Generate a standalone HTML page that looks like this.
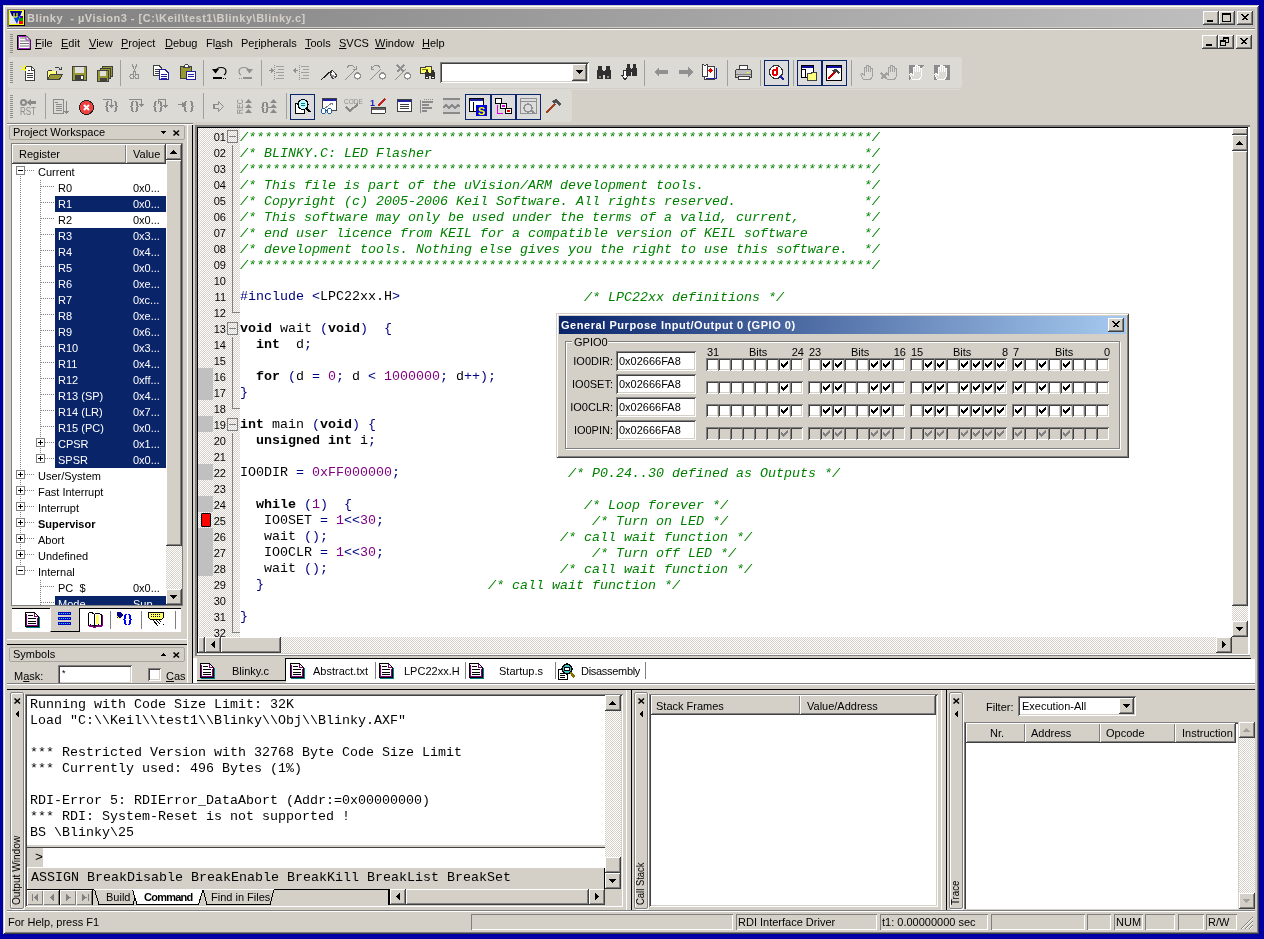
<!DOCTYPE html><html><head><meta charset="utf-8"><title>Blinky - uVision3</title><style>
*{margin:0;padding:0;box-sizing:border-box}
html,body{width:1264px;height:939px;overflow:hidden}
body{background:#0000a4;position:relative;will-change:transform;font-family:"Liberation Sans",sans-serif;font-size:11px;color:#000}
.a{position:absolute}
.t{line-height:13px;white-space:pre}
.m{font-family:"Liberation Mono",monospace;font-size:13.33px;line-height:16px;white-space:pre}
.face{background:#d4d0c8}
.raised{background:#d4d0c8;box-shadow:inset -1px -1px #404040,inset 1px 1px #fff,inset -2px -2px #808080,inset 2px 2px #d4d0c8}
.sunk{box-shadow:inset 1px 1px #808080,inset -1px -1px #fff,inset 2px 2px #404040,inset -2px -2px #d4d0c8}
.thin{box-shadow:inset 1px 1px #fff,inset -1px -1px #808080}
.thinsunk{box-shadow:inset 1px 1px #808080,inset -1px -1px #fff}
.dith{background:repeating-conic-gradient(#d4d0c8 0 25%,#fff 0 50%) 0 0/2px 2px}
.u{text-decoration:underline}
.tb{background:#dcdad5;border-radius:3px}
.grip{background:repeating-linear-gradient(#8f8d88 0 1px,transparent 1px 2px)}
svg{position:absolute;overflow:visible}
</style></head><body><div class="a " style="left:3px;top:5px;width:1256px;height:929px;background:#d4d0c8;box-shadow:inset 1px 1px #d4d0c8,inset -1px -1px #404040,inset 2px 2px #fff,inset -2px -2px #808080"></div><div class="a " style="left:7px;top:9px;width:1248px;height:18px;background:linear-gradient(90deg,#808080,#c0c0c0)"></div><svg style="left:9px;top:10px" width="16" height="16" viewBox="0 0 16 16">
<rect x="0" y="0" width="16" height="16" fill="#000"/><rect x="0" y="0" width="15" height="15" fill="#ff0"/>
<rect x="1" y="1" width="13" height="13" fill="#e8e8f0"/>
<path d="M1 1H13L8 14Z" fill="#0040e0"/><path d="M1 1H13L11 6H3Z" fill="#000090"/>
<path d="M5 3V8M5 7H8M8 3V7" stroke="#ff0" stroke-width="1.2" fill="none"/>
<rect x="11" y="6" width="3" height="2" fill="#4000c0"/><rect x="10" y="8" width="4" height="3" fill="#00a000"/><rect x="10" y="11" width="4" height="3" fill="#f00"/>
</svg><div class="a t " style="left:27px;top:12px;color:#d4d0c8;font-weight:bold;letter-spacing:0.51px">Blinky  - µVision3 - [C:\Keil\test1\Blinky\Blinky.c]</div><div class="a raised" style="left:1203px;top:11px;width:16px;height:14px;"></div><div class="a " style="left:1207px;top:20px;width:6px;height:2px;background:#000"></div><div class="a raised" style="left:1219px;top:11px;width:16px;height:14px;"></div><div class="a " style="left:1222px;top:13px;width:9px;height:9px;border:1px solid #000;border-top-width:2px"></div><div class="a raised" style="left:1237px;top:11px;width:16px;height:14px;"></div><svg style="left:1237px;top:11px" width="16" height="14"><path d="M4.5 3.5L10.5 9.5M10.5 3.5L4.5 9.5M5.5 3.5L11.5 9.5M11.5 3.5L5.5 9.5" stroke="#000" stroke-width="1" fill="none" shape-rendering="crispEdges"/></svg><div class="a " style="left:7px;top:28px;width:1248px;height:1px;background:#808080"></div><div class="a " style="left:7px;top:29px;width:1248px;height:1px;background:#fff"></div><div class="a grip" style="left:10px;top:34px;width:3px;height:19px;"></div><svg style="left:17px;top:35px" width="15" height="15" viewBox="0 0 15 15"><path d="M0.5 0.5H9L13.5 5V14.5H0.5Z" fill="#fff" stroke="#000" stroke-width="1"/><path d="M1.5 1.5H9V5H13V13.5H1.5Z" fill="none" stroke="#a020c0" stroke-width="1"/><path d="M3 3H9M3 6H12M3 8.5H12M3 11H12" stroke="#707070" stroke-width="1.2"/></svg><div class="a t " style="left:35px;top:37px;"><span class="u">F</span>ile</div><div class="a t " style="left:61px;top:37px;"><span class="u">E</span>dit</div><div class="a t " style="left:89px;top:37px;"><span class="u">V</span>iew</div><div class="a t " style="left:121px;top:37px;"><span class="u">P</span>roject</div><div class="a t " style="left:165px;top:37px;"><span class="u">D</span>ebug</div><div class="a t " style="left:206px;top:37px;">Fl<span class="u">a</span>sh</div><div class="a t " style="left:241px;top:37px;">Pe<span class="u">r</span>ipherals</div><div class="a t " style="left:305px;top:37px;"><span class="u">T</span>ools</div><div class="a t " style="left:339px;top:37px;"><span class="u">S</span>VCS</div><div class="a t " style="left:375px;top:37px;"><span class="u">W</span>indow</div><div class="a t " style="left:422px;top:37px;"><span class="u">H</span>elp</div><div class="a raised" style="left:1202px;top:35px;width:16px;height:14px;"></div><div class="a " style="left:1206px;top:44px;width:6px;height:2px;background:#000"></div><div class="a raised" style="left:1218px;top:35px;width:16px;height:14px;"></div><div class="a " style="left:1223px;top:37px;width:6px;height:6px;border:1px solid #000;border-top-width:2px"></div><div class="a " style="left:1220px;top:40px;width:6px;height:6px;border:1px solid #000;border-top-width:2px;background:#d4d0c8"></div><div class="a raised" style="left:1236px;top:35px;width:16px;height:14px;"></div><svg style="left:1236px;top:35px" width="16" height="14"><path d="M4.5 3.5L10.5 9.5M10.5 3.5L4.5 9.5M5.5 3.5L11.5 9.5M11.5 3.5L5.5 9.5" stroke="#000" stroke-width="1" fill="none" shape-rendering="crispEdges"/></svg><div class="a tb" style="left:8px;top:57px;width:954px;height:31px;"></div><div class="a " style="left:10px;top:89px;width:950px;height:1px;background:#dcdad5"></div><div class="a grip" style="left:10px;top:62px;width:3px;height:22px;"></div><div class="a tb" style="left:8px;top:90px;width:564px;height:32px;"></div><div class="a grip" style="left:10px;top:95px;width:3px;height:23px;"></div><div class="a " style="left:7px;top:123px;width:186px;height:1px;background:#808080"></div><div class="a " style="left:7px;top:124px;width:186px;height:1px;background:#fff"></div><svg style="left:21px;top:65px" width="16" height="16" viewBox="0 0 16 16" shape-rendering="crispEdges"><path d="M4.5 1.5H10L13.5 5V15.5H4.5Z" fill="#fff" stroke="#404040"/><path d="M10 1.5V5H13.5" fill="#fff" stroke="#404040"/><path d="M6 8.5H12M6 10.5H12M6 12.5H12M7 5.5H9" stroke="#404040"/><path d="M0 1L5 6M3 0V5M0 4H5M5 1L1 5" stroke="#ff0" stroke-width="1"/></svg><svg style="left:47px;top:66px" width="16" height="15" viewBox="0 0 16 15" shape-rendering="crispEdges"><path d="M0.5 4.5H4L5 5.5H9V8" fill="#fff" stroke="#404040"/><path d="M0.5 4.5V13.5H11" fill="none" stroke="#404040"/><rect x="1" y="5" width="8" height="8" fill="#ffff80"/><path d="M0.5 13.5L3.5 8.5H15.5L12.5 13.5Z" fill="#999933" stroke="#404040"/><path d="M8 2Q11 0 13 3M11.5 3H14.5V1" fill="none" stroke="#404040"/></svg><svg style="left:72px;top:66px" width="15" height="15" viewBox="0 0 15 15" shape-rendering="crispEdges"><rect x="0.5" y="0.5" width="14" height="14" fill="#999933" stroke="#404040"/><rect x="3" y="1" width="9" height="6" fill="#e0e0e0"/><rect x="3" y="9" width="9" height="5.5" fill="#404040"/><rect x="9" y="10" width="2" height="3" fill="#fff"/></svg><svg style="left:97px;top:66px" width="16" height="16" viewBox="0 0 16 16" shape-rendering="crispEdges"><rect x="5.5" y="0.5" width="10" height="10" fill="#999933" stroke="#404040"/><rect x="3.5" y="2.5" width="10" height="10" fill="#999933" stroke="#404040"/><rect x="0.5" y="4.5" width="11" height="11" fill="#999933" stroke="#404040"/><rect x="3" y="5" width="6" height="5" fill="#e0e0e0"/><rect x="3" y="12" width="7" height="3" fill="#404040"/></svg><div class="a " style="left:120px;top:60px;width:1px;height:26px;background:#a0a0a0"></div><svg style="left:129px;top:64px" width="12" height="16" viewBox="0 0 12 16" shape-rendering="crispEdges"><path d="M3 0L7 10M8 0L4 10" stroke="#909090"/><circle cx="3" cy="12.5" r="2" fill="none" stroke="#909090"/><circle cx="8" cy="12.5" r="2" fill="none" stroke="#909090"/></svg><svg style="left:153px;top:65px" width="16" height="15" viewBox="0 0 16 15" shape-rendering="crispEdges"><path d="M0.5 0.5H6L8.5 3V10.5H0.5Z" fill="#fff" stroke="#404040"/><path d="M2 4H7M2 6H7M2 8H6" stroke="#404040"/><path d="M6.5 4.5H12L15.5 8V14.5H6.5Z" fill="#fff" stroke="#2020a0"/><path d="M8 9H14M8 11H14M8 13H14" stroke="#2020a0"/></svg><svg style="left:180px;top:64px" width="16" height="16" viewBox="0 0 16 16" shape-rendering="crispEdges"><rect x="0.5" y="2.5" width="11" height="12" fill="#999933" stroke="#404040"/><path d="M3.5 3.5L5.5 0.5H7.5L9.5 3.5Z" fill="#fff" stroke="#404040"/><rect x="6.5" y="7.5" width="9" height="8" fill="#fff" stroke="#2020a0"/><path d="M8 10H14M8 12H14" stroke="#2020a0"/></svg><div class="a " style="left:203px;top:60px;width:1px;height:26px;background:#a0a0a0"></div><svg style="left:212px;top:65px" width="16" height="15" viewBox="0 0 16 15" shape-rendering="crispEdges"><path d="M3.5 7.5Q4 2.5 9 2.5Q14 2.5 14 6.5Q14 9 12 10" fill="none" stroke="#000" stroke-width="1.2" shape-rendering="auto"/><path d="M0 4L3.5 8.5L7 4Z" fill="#000" shape-rendering="auto"/><path d="M1 12.5H10" stroke="#000" stroke-width="2"/><path d="M11 13H12M13 13H14" stroke="#000"/></svg><svg style="left:237px;top:65px" width="16" height="15" viewBox="0 0 16 15" shape-rendering="crispEdges"><path d="M12.5 7.5Q12 2.5 7 2.5Q2 2.5 2 6.5Q2 9 4 10" fill="none" stroke="#909090" stroke-width="1.2" shape-rendering="auto"/><path d="M16 4L12.5 8.5L9 4Z" fill="#909090" shape-rendering="auto"/><path d="M6 12.5H15" stroke="#909090" stroke-width="2"/><path d="M2 13H3M4 13H5" stroke="#909090"/></svg><div class="a " style="left:261px;top:60px;width:1px;height:26px;background:#a0a0a0"></div><svg style="left:269px;top:65px" width="16" height="15" viewBox="0 0 16 15" shape-rendering="crispEdges"><path d="M7 1.5H15M9 4.5H15M7 7.5H15M9 10.5H15M7 13.5H15" stroke="#a0a0a0"/><path d="M0 5.5H4M2 3.5L4 5.5L2 7.5" stroke="#909090" fill="none"/><path d="M5 0V15" stroke="#909090" stroke-dasharray="1 1"/></svg><svg style="left:294px;top:65px" width="16" height="15" viewBox="0 0 16 15" shape-rendering="crispEdges"><path d="M7 1.5H15M9 4.5H15M7 7.5H15M9 10.5H15M7 13.5H15" stroke="#a0a0a0"/><path d="M4 5.5H0M2 3.5L0 5.5L2 7.5" stroke="#909090" fill="none"/><path d="M5 0V15" stroke="#909090" stroke-dasharray="1 1"/></svg><svg style="left:321px;top:65px" width="16" height="16" viewBox="0 0 16 16" shape-rendering="crispEdges"><path d="M0 15L11 5" stroke="#202020" stroke-width="1.1"/><path d="M11 5L9 10L12 14L16 11L14 8Z" fill="#fff" stroke="#404040"/><path d="M10 10L14 12" stroke="#909090" stroke-width="2"/></svg><svg style="left:345px;top:64px" width="16" height="17" viewBox="0 0 16 17" shape-rendering="crispEdges"><path d="M0 16L11 5" stroke="#909090" stroke-width="1.1"/><path d="M2 4Q4 0 8 2L10 4" fill="none" stroke="#909090" stroke-width="1.2"/><path d="M8 5H11V2" fill="none" stroke="#909090"/><circle cx="12.5" cy="12" r="3" fill="#fff" stroke="#909090" stroke-width="1.3"/></svg><svg style="left:370px;top:64px" width="16" height="17" viewBox="0 0 16 17" shape-rendering="crispEdges"><path d="M0 16L11 5" stroke="#909090" stroke-width="1.1"/><path d="M10 4Q8 0 4 2L2 4" fill="none" stroke="#909090" stroke-width="1.2"/><path d="M4 5H1V2" fill="none" stroke="#909090"/><circle cx="12.5" cy="12" r="3" fill="#fff" stroke="#909090" stroke-width="1.3"/></svg><svg style="left:395px;top:64px" width="16" height="17" viewBox="0 0 16 17" shape-rendering="crispEdges"><path d="M0 16L11 5" stroke="#909090" stroke-width="1.1"/><path d="M2 1L9 8M9 1L2 8" stroke="#909090" stroke-width="2"/><circle cx="12.5" cy="12" r="3" fill="#fff" stroke="#909090" stroke-width="1.3"/></svg><svg style="left:420px;top:64px" width="16" height="16" viewBox="0 0 16 16" shape-rendering="crispEdges"><path d="M0.5 3.5H5L6 2H11V9H0.5Z" fill="#ffff60" stroke="#404040"/><path d="M2 5H8" stroke="#808000"/><rect x="5" y="8" width="4" height="7" fill="#303030"/><rect x="11" y="8" width="4" height="7" fill="#303030"/><rect x="7" y="9" width="6" height="3" fill="#303030"/><rect x="6" y="6" width="2" height="3" fill="#303030"/><rect x="12" y="6" width="2" height="3" fill="#303030"/><rect x="6" y="13" width="2" height="1" fill="#fff"/><rect x="12" y="13" width="2" height="1" fill="#fff"/></svg><div class="a sunk" style="left:440px;top:62px;width:149px;height:21px;background:#fff"></div><div class="a raised" style="left:572px;top:64px;width:15px;height:17px;"></div><svg style="left:572px;top:64px" width="15" height="17" viewBox="0 0 15 17" shape-rendering="crispEdges"><rect x="4" y="6" width="7" height="1" fill="#000"/><rect x="5" y="7" width="5" height="1" fill="#000"/><rect x="6" y="8" width="3" height="1" fill="#000"/><rect x="7" y="9" width="1" height="1" fill="#000"/></svg><svg style="left:596px;top:65px" width="16" height="14" viewBox="0 0 16 14" shape-rendering="crispEdges"><rect x="1" y="5" width="6" height="9" fill="#303030"/><rect x="9" y="5" width="6" height="9" fill="#303030"/><rect x="5" y="6" width="6" height="4" fill="#303030"/><rect x="2" y="1" width="4" height="5" fill="#303030"/><rect x="10" y="1" width="4" height="5" fill="#303030"/><rect x="3" y="11" width="2" height="2" fill="#909090"/><rect x="11" y="11" width="2" height="2" fill="#909090"/></svg><svg style="left:621px;top:64px" width="16" height="16" viewBox="0 0 16 16" shape-rendering="crispEdges"><rect x="5" y="4" width="5" height="8" fill="#303030"/><rect x="11" y="4" width="5" height="8" fill="#303030"/><rect x="8" y="5" width="5" height="3" fill="#303030"/><rect x="6" y="0" width="3" height="5" fill="#303030"/><rect x="12" y="0" width="3" height="5" fill="#303030"/><path d="M2.5 6.5H5.5V11.5H7.5L4 15.5L0.5 11.5H2.5Z" fill="#fff" stroke="#303030"/></svg><div class="a " style="left:644px;top:60px;width:1px;height:26px;background:#a0a0a0"></div><svg style="left:653px;top:66px" width="16" height="12" viewBox="0 0 16 12" shape-rendering="crispEdges"><path d="M1 6L6 1V4H15V8H6V11Z" fill="#909090"/></svg><svg style="left:678px;top:66px" width="16" height="12" viewBox="0 0 16 12" shape-rendering="crispEdges"><path d="M15 6L10 1V4H1V8H10V11Z" fill="#909090"/></svg><svg style="left:702px;top:64px" width="16" height="16" viewBox="0 0 16 16" shape-rendering="crispEdges"><path d="M2.5 2.5H12.5V15.5H2.5Z" fill="#fff" stroke="#404040"/><path d="M0.5 0.5Q3 2 5.5 0.5V12Q3 14 0.5 12Z" fill="#fff" stroke="#404040"/><circle cx="8.5" cy="6.5" r="2.2" fill="#e00000"/><path d="M4 14H14V4" fill="none" stroke="#2020a0"/></svg><div class="a " style="left:727px;top:60px;width:1px;height:26px;background:#a0a0a0"></div><svg style="left:735px;top:65px" width="17" height="15" viewBox="0 0 17 15" shape-rendering="crispEdges"><path d="M4.5 0.5H12.5V5.5H4.5Z" fill="#fff" stroke="#404040"/><path d="M0.5 6.5Q0.5 4.5 3 4.5H14Q16.5 4.5 16.5 6.5V12.5H0.5Z" fill="#c0c0c0" stroke="#404040"/><path d="M1 9H16" stroke="#808080"/><rect x="3" y="11.5" width="11" height="3" fill="#fff" stroke="#404040"/><rect x="12" y="7" width="2" height="1" fill="#ff0"/></svg><div class="a " style="left:760px;top:60px;width:1px;height:26px;background:#a0a0a0"></div><div class="a " style="left:764px;top:60px;width:25px;height:26px;background:#dcdcdf;border:1px solid #0a246a"></div><svg style="left:768px;top:64px" width="18" height="18" viewBox="0 0 18 18" shape-rendering="crispEdges"><circle cx="8" cy="8" r="6.5" fill="#fff" stroke="#303030" stroke-width="1.2"/><path d="M12 12L16 16" stroke="#2020a0" stroke-width="2.5"/><path d="M9 3V11M9 11H7Q5 11 5 8.5Q5 6 7 6H9" fill="none" stroke="#e00000" stroke-width="2"/></svg><div class="a " style="left:793px;top:60px;width:1px;height:26px;background:#a0a0a0"></div><div class="a " style="left:797px;top:60px;width:25px;height:26px;background:#dcdcdf;border:1px solid #0a246a"></div><div class="a " style="left:822px;top:60px;width:25px;height:26px;background:#dcdcdf;border:1px solid #0a246a"></div><svg style="left:801px;top:65px" width="17" height="16" viewBox="0 0 17 16" shape-rendering="crispEdges"><rect x="0.5" y="0.5" width="12" height="12" fill="#fff" stroke="#000"/><rect x="1" y="1" width="11" height="2" fill="#1010a0"/><path d="M1 4H4V12" fill="none" stroke="#000"/><path d="M6.5 8.5H10L11 7.5H15.5V15.5H6.5Z" fill="#ffff80" stroke="#404040"/></svg><svg style="left:826px;top:65px" width="16" height="16" viewBox="0 0 16 16" shape-rendering="crispEdges"><rect x="0.5" y="0.5" width="15" height="15" fill="#fff" stroke="#000"/><rect x="1" y="1" width="14" height="2" fill="#1010a0"/><path d="M2 14L9 7" stroke="#c00000" stroke-width="2"/><path d="M6 5L10 4L14 8L12 9L10 7L8 8Z" fill="#404040"/></svg><div class="a " style="left:851px;top:60px;width:1px;height:26px;background:#a0a0a0"></div><svg style="left:860px;top:65px" width="16" height="16" viewBox="0 0 16 16" shape-rendering="crispEdges"><path d="M3.5 14.5L0.5 9.5L2 8.5L4.5 10.5V3Q4.5 2 5.5 2Q6.5 2 6.5 3V7V1.5Q6.5 0.5 7.5 0.5Q8.5 0.5 8.5 1.5V7V2Q8.5 1 9.5 1Q10.5 1 10.5 2V7V4Q10.5 3 11.5 3Q12.5 3 12.5 4V11L10.5 14.5Z" fill="none" stroke="#a0a0a0"/></svg><svg style="left:884px;top:65px" width="16" height="16" viewBox="0 0 16 16" shape-rendering="crispEdges"><path d="M3.5 14.5L0.5 9.5L2 8.5L4.5 10.5V3Q4.5 2 5.5 2Q6.5 2 6.5 3V7V1.5Q6.5 0.5 7.5 0.5Q8.5 0.5 8.5 1.5V7V2Q8.5 1 9.5 1Q10.5 1 10.5 2V7V4Q10.5 3 11.5 3Q12.5 3 12.5 4V11L10.5 14.5Z" fill="none" stroke="#a0a0a0"/></svg><svg style="left:880px;top:65px" width="16" height="16" viewBox="0 0 16 16" shape-rendering="crispEdges"><path d="M1 8L7 14M7 8L1 14" stroke="#a0a0a0" stroke-width="2"/></svg><svg style="left:909px;top:65px" width="16" height="16" viewBox="0 0 16 16" shape-rendering="crispEdges"><path d="M0 0H16L0 15Z" fill="#8c8c8c"/><path d="M3.5 14.5L0.5 9.5L2 8.5L4.5 10.5V3Q4.5 2 5.5 2Q6.5 2 6.5 3V7V1.5Q6.5 0.5 7.5 0.5Q8.5 0.5 8.5 1.5V7V2Q8.5 1 9.5 1Q10.5 1 10.5 2V7V4Q10.5 3 11.5 3Q12.5 3 12.5 4V11L10.5 14.5Z" fill="#dcdad5" stroke="#fff"/></svg><svg style="left:909px;top:65px" width="16" height="15" viewBox="0 0 16 15" shape-rendering="crispEdges"><path d="M0 0H16V15H0Z" fill="none"/><path d="M16 0V15H0" fill="#8c8c8c" opacity="0"/></svg><svg style="left:934px;top:65px" width="16" height="16" viewBox="0 0 16 16" shape-rendering="crispEdges"><rect x="0" y="0" width="16" height="15" fill="#8c8c8c"/><path d="M3.5 14.5L0.5 9.5L2 8.5L4.5 10.5V3Q4.5 2 5.5 2Q6.5 2 6.5 3V7V1.5Q6.5 0.5 7.5 0.5Q8.5 0.5 8.5 1.5V7V2Q8.5 1 9.5 1Q10.5 1 10.5 2V7V4Q10.5 3 11.5 3Q12.5 3 12.5 4V11L10.5 14.5Z" fill="#dcdad5" stroke="#fff"/></svg><svg style="left:20px;top:99px" width="17" height="16" viewBox="0 0 17 16" shape-rendering="crispEdges"><circle cx="3.5" cy="3.5" r="2.5" fill="none" stroke="#8a8a8a" stroke-width="2" shape-rendering="auto"/><path d="M10 3.5H16" stroke="#8a8a8a" stroke-width="3"/><path d="M11 0L6.5 3.5L11 7Z" fill="#8a8a8a" shape-rendering="auto"/><text x="0" y="15.5" font-family="Liberation Sans" font-size="10" fill="#8a8a8a" textLength="16" lengthAdjust="spacingAndGlyphs">RST</text></svg><div class="a " style="left:45px;top:93px;width:1px;height:26px;background:#a0a0a0"></div><svg style="left:53px;top:99px" width="17" height="16" viewBox="0 0 17 16" shape-rendering="crispEdges"><rect x="0.5" y="0.5" width="10" height="14" fill="none" stroke="#8a8a8a"/><path d="M2 3H5M3 5H9M3 7H9M3 9H9M3 11H9" stroke="#8a8a8a"/><path d="M13.5 2V14" stroke="#8a8a8a"/><path d="M11 12L13.5 15L16 12Z" fill="#8a8a8a"/></svg><svg style="left:79px;top:100px" width="16" height="16" viewBox="0 0 16 16" shape-rendering="crispEdges"><circle cx="7.5" cy="7.5" r="7" fill="#f04040" stroke="#202020"/><path d="M5 5L10 10M10 5L5 10" stroke="#fff" stroke-width="2" shape-rendering="auto"/></svg><svg style="left:103px;top:98px" width="16" height="16" viewBox="0 0 16 16" shape-rendering="crispEdges"><rect x="4" y="3" width="2" height="1" fill="#8a8a8a"/><rect x="3" y="4" width="2" height="4" fill="#8a8a8a"/><rect x="2" y="8" width="2" height="1" fill="#8a8a8a"/><rect x="3" y="9" width="2" height="4" fill="#8a8a8a"/><rect x="4" y="13" width="2" height="1" fill="#8a8a8a"/><rect x="11" y="3" width="2" height="1" fill="#8a8a8a"/><rect x="12" y="4" width="2" height="4" fill="#8a8a8a"/><rect x="13" y="8" width="2" height="1" fill="#8a8a8a"/><rect x="12" y="9" width="2" height="4" fill="#8a8a8a"/><rect x="11" y="13" width="2" height="1" fill="#8a8a8a"/><path d="M0 1.5H7.5Q8.5 1.5 8.5 3V8" fill="none" stroke="#8a8a8a"/><path d="M6 7H11L8.5 10Z" fill="#8a8a8a"/></svg><svg style="left:129px;top:98px" width="16" height="16" viewBox="0 0 16 16" shape-rendering="crispEdges"><rect x="3" y="3" width="2" height="1" fill="#8a8a8a"/><rect x="2" y="4" width="2" height="4" fill="#8a8a8a"/><rect x="1" y="8" width="2" height="1" fill="#8a8a8a"/><rect x="2" y="9" width="2" height="4" fill="#8a8a8a"/><rect x="3" y="13" width="2" height="1" fill="#8a8a8a"/><rect x="6" y="3" width="2" height="1" fill="#8a8a8a"/><rect x="7" y="4" width="2" height="4" fill="#8a8a8a"/><rect x="8" y="8" width="2" height="1" fill="#8a8a8a"/><rect x="7" y="9" width="2" height="4" fill="#8a8a8a"/><rect x="6" y="13" width="2" height="1" fill="#8a8a8a"/><path d="M0 1.5H11.5Q12.5 1.5 12.5 3V6" fill="none" stroke="#8a8a8a"/><path d="M10 6H15L12.5 9Z" fill="#8a8a8a"/></svg><svg style="left:153px;top:98px" width="16" height="16" viewBox="0 0 16 16" shape-rendering="crispEdges"><rect x="2" y="3" width="2" height="1" fill="#8a8a8a"/><rect x="1" y="4" width="2" height="4" fill="#8a8a8a"/><rect x="0" y="8" width="2" height="1" fill="#8a8a8a"/><rect x="1" y="9" width="2" height="4" fill="#8a8a8a"/><rect x="2" y="13" width="2" height="1" fill="#8a8a8a"/><rect x="6" y="3" width="2" height="1" fill="#8a8a8a"/><rect x="7" y="4" width="2" height="4" fill="#8a8a8a"/><rect x="8" y="8" width="2" height="1" fill="#8a8a8a"/><rect x="7" y="9" width="2" height="4" fill="#8a8a8a"/><rect x="6" y="13" width="2" height="1" fill="#8a8a8a"/><path d="M5.5 6V2.5Q5.5 1.5 7 1.5H11.5Q12.5 1.5 12.5 3V7" fill="none" stroke="#8a8a8a"/><path d="M10 7H15L12.5 10Z" fill="#8a8a8a"/></svg><svg style="left:178px;top:98px" width="16" height="16" viewBox="0 0 16 16" shape-rendering="crispEdges"><rect x="7" y="3" width="2" height="1" fill="#8a8a8a"/><rect x="6" y="4" width="2" height="4" fill="#8a8a8a"/><rect x="5" y="8" width="2" height="1" fill="#8a8a8a"/><rect x="6" y="9" width="2" height="4" fill="#8a8a8a"/><rect x="7" y="13" width="2" height="1" fill="#8a8a8a"/><rect x="12" y="3" width="2" height="1" fill="#8a8a8a"/><rect x="13" y="4" width="2" height="4" fill="#8a8a8a"/><rect x="14" y="8" width="2" height="1" fill="#8a8a8a"/><rect x="13" y="9" width="2" height="4" fill="#8a8a8a"/><rect x="12" y="13" width="2" height="1" fill="#8a8a8a"/><path d="M0 6.5H5" stroke="#8a8a8a"/><path d="M4 4L7 6.5L4 9Z" fill="#8a8a8a"/></svg><div class="a " style="left:203px;top:93px;width:1px;height:26px;background:#a0a0a0"></div><svg style="left:213px;top:100px" width="12" height="13" viewBox="0 0 12 13" shape-rendering="crispEdges"><path d="M1.5 4.5H5.5V1.5L10.5 6.5L5.5 11.5V8.5H1.5Z" fill="none" stroke="#8a8a8a" shape-rendering="auto"/><path d="M1 4V9" stroke="#8a8a8a" stroke-width="2"/></svg><svg style="left:236px;top:98px" width="17" height="17" viewBox="0 0 17 17" shape-rendering="crispEdges"><text x="7" y="16" transform="rotate(-90 7 16)" font-family="Liberation Sans" font-size="9" fill="#8a8a8a" textLength="15" lengthAdjust="spacingAndGlyphs">REC</text><path d="M9 5L12.5 1L16 5Z M9 10L12.5 6L16 10Z M9 15L12.5 11L16 15Z" fill="#8a8a8a" shape-rendering="auto"/></svg><svg style="left:261px;top:98px" width="17" height="17" viewBox="0 0 17 17" shape-rendering="crispEdges"><rect x="2" y="4" width="2" height="1" fill="#8a8a8a"/><rect x="1" y="5" width="2" height="4" fill="#8a8a8a"/><rect x="0" y="9" width="2" height="1" fill="#8a8a8a"/><rect x="1" y="10" width="2" height="4" fill="#8a8a8a"/><rect x="2" y="14" width="2" height="1" fill="#8a8a8a"/><rect x="4" y="4" width="2" height="1" fill="#8a8a8a"/><rect x="5" y="5" width="2" height="4" fill="#8a8a8a"/><rect x="6" y="9" width="2" height="1" fill="#8a8a8a"/><rect x="5" y="10" width="2" height="4" fill="#8a8a8a"/><rect x="4" y="14" width="2" height="1" fill="#8a8a8a"/><path d="M8 9.5H10" stroke="#8a8a8a"/><path d="M9 5L12.5 1L16 5Z M9 10L12.5 6L16 10Z M9 15L12.5 11L16 15Z" fill="#8a8a8a" shape-rendering="auto"/></svg><div class="a " style="left:286px;top:93px;width:1px;height:26px;background:#a0a0a0"></div><div class="a " style="left:290px;top:94px;width:25px;height:26px;background:#dcdcdf;border:1px solid #0a246a"></div><svg style="left:294px;top:98px" width="18" height="18" viewBox="0 0 18 18" shape-rendering="crispEdges"><path d="M1.5 5.5H7.5L10.5 8.5V15.5H1.5Z" fill="#fff" stroke="#000"/><circle cx="9" cy="6.5" r="5" fill="#c0ffff" stroke="#000" stroke-width="1.2"/><path d="M7 5H11M7 7H11" stroke="#008080"/><path d="M12.5 10L16 14" stroke="#000" stroke-width="2"/></svg><svg style="left:320px;top:98px" width="17" height="16" viewBox="0 0 17 16" shape-rendering="crispEdges"><rect x="2.5" y="0.5" width="14" height="12" fill="#fff" stroke="#404040"/><rect x="3" y="1" width="13" height="2" fill="#2020a0"/><path d="M5 10L12 5M10 5H12V7" stroke="#808080" fill="none"/><circle cx="3.5" cy="13" r="2.5" fill="#fff" stroke="#2060a0"/><circle cx="9.5" cy="13" r="2.5" fill="#fff" stroke="#2060a0"/></svg><svg style="left:344px;top:98px" width="16" height="16" viewBox="0 0 16 16" shape-rendering="crispEdges"><text x="0" y="6" font-family="Liberation Sans" font-size="6.5" fill="#8a8a8a">CODE</text><path d="M2 9L6 13L14 6" fill="none" stroke="#8a8a8a" stroke-width="2"/></svg><svg style="left:370px;top:98px" width="17" height="16" viewBox="0 0 17 16" shape-rendering="crispEdges"><text x="0" y="8" font-family="Liberation Sans" font-weight="bold" font-size="9" fill="#2020c0">1</text><path d="M8 8L15 1" stroke="#c02020" stroke-width="2"/><path d="M1.5 9.5H15.5V13.5Q15.5 15.5 13.5 15.5H1.5Z" fill="#fff" stroke="#404040"/><rect x="2" y="10" width="13" height="2" fill="#606060"/></svg><svg style="left:397px;top:99px" width="15" height="13" viewBox="0 0 15 13" shape-rendering="crispEdges"><rect x="0.5" y="0.5" width="14" height="12" fill="#fff" stroke="#404040"/><rect x="1" y="1" width="13" height="2" fill="#2020a0"/><path d="M3 5H12M3 7H12M3 9H12" stroke="#404040"/></svg><svg style="left:419px;top:99px" width="16" height="15" viewBox="0 0 16 15" shape-rendering="crispEdges"><path d="M1 1V14" stroke="#8a8a8a"/><path d="M3 3H14M3 6H10M3 9H13M3 12H8" stroke="#8a8a8a" stroke-width="2"/><path d="M5 0H14" stroke="#8a8a8a" stroke-dasharray="1 1"/></svg><svg style="left:443px;top:98px" width="17" height="16" viewBox="0 0 17 16" shape-rendering="crispEdges"><rect x="0" y="0" width="17" height="16" fill="#d0d0d0"/><path d="M0 1H17M0 15H17" stroke="#8a8a8a" stroke-width="2"/><path d="M0 10L3 7L6 10L9 7L12 10L15 7L17 9" fill="none" stroke="#8a8a8a" stroke-width="1.5"/></svg><div class="a " style="left:465px;top:94px;width:26px;height:26px;background:#dcdcdf;border:1px solid #0a246a"></div><div class="a " style="left:491px;top:94px;width:25px;height:26px;background:#dcdcdf;border:1px solid #0a246a"></div><div class="a " style="left:516px;top:94px;width:25px;height:26px;background:#dcdcdf;border:1px solid #0a246a"></div><svg style="left:469px;top:98px" width="18" height="18" viewBox="0 0 18 18" shape-rendering="crispEdges"><rect x="0.5" y="0.5" width="14" height="13" fill="#fff" stroke="#000"/><rect x="1" y="1" width="13" height="2" fill="#2020a0"/><path d="M4 4V13" stroke="#000"/><rect x="7" y="7" width="11" height="11" fill="#0000e0"/><text x="9" y="16.5" font-family="Liberation Sans" font-weight="bold" font-size="11" fill="#ff0">S</text></svg><svg style="left:495px;top:98px" width="18" height="18" viewBox="0 0 18 18" shape-rendering="crispEdges"><rect x="0.5" y="0.5" width="6" height="5" fill="#fff" stroke="#000"/><rect x="5.5" y="5.5" width="6" height="5" fill="#fff" stroke="#000"/><rect x="10.5" y="10.5" width="6" height="5" fill="#fff" stroke="#000"/><rect x="12" y="12" width="3" height="2" fill="#e00000"/><rect x="7" y="7" width="3" height="2" fill="#e000e0"/><path d="M2 7V15H8" fill="none" stroke="#e000e0"/></svg><svg style="left:520px;top:98px" width="17" height="17" viewBox="0 0 17 17" shape-rendering="crispEdges"><rect x="0.5" y="0.5" width="16" height="15" fill="none" stroke="#909090"/><path d="M1 3H16" stroke="#909090"/><circle cx="8" cy="10" r="4" fill="none" stroke="#909090" stroke-width="1.5"/><path d="M12 13L15 16" stroke="#909090" stroke-width="1.5"/></svg><svg style="left:545px;top:98px" width="16" height="16" viewBox="0 0 16 16" shape-rendering="crispEdges"><path d="M1 15L10 6" stroke="#a04020" stroke-width="2.2"/><path d="M7 3L11 1L16 6L14 8L11 5L9 6Z" fill="#505050"/></svg><div class="a " style="left:9px;top:125px;width:176px;height:15px;border:1px solid #a8a59f;border-radius:2px"></div><div class="a t " style="left:13px;top:126px;">Project Workspace</div><svg style="left:161px;top:131px" width="5" height="3" viewBox="0 0 5 3" shape-rendering="crispEdges"><rect x="0" y="0" width="5" height="1" fill="#000"/><rect x="1" y="1" width="3" height="1" fill="#000"/><rect x="2" y="2" width="1" height="1" fill="#000"/></svg><svg style="left:173px;top:130px" width="7" height="6" viewBox="0 0 7 6" shape-rendering="crispEdges"><path d="M0.5 0.5L6 5.5M6 0.5L0.5 5.5" stroke="#000" stroke-width="1.6" shape-rendering="auto"/></svg><div class="a " style="left:11px;top:143px;width:172px;height:463px;background:#fff;border:1px solid #808080;border-right-color:#808080"></div><div class="a raised" style="left:12px;top:144px;width:115px;height:20px;"></div><div class="a t " style="left:19px;top:148px;">Register</div><div class="a raised" style="left:126px;top:144px;width:40px;height:20px;"></div><div class="a t " style="left:133px;top:148px;">Value</div><div class="a " style="left:166px;top:144px;width:16px;height:461px;background:#d4d0c8"></div><div class="a raised" style="left:166px;top:144px;width:16px;height:16px;"></div><svg style="left:166px;top:144px" width="16" height="16" viewBox="0 0 16 16" shape-rendering="crispEdges"><rect x="4" y="9" width="7" height="1" fill="#000"/><rect x="5" y="8" width="5" height="1" fill="#000"/><rect x="6" y="7" width="3" height="1" fill="#000"/><rect x="7" y="6" width="1" height="1" fill="#000"/></svg><div class="a raised" style="left:166px;top:160px;width:16px;height:386px;"></div><div class="a dith" style="left:166px;top:546px;width:16px;height:44px;"></div><div class="a raised" style="left:166px;top:589px;width:16px;height:16px;"></div><svg style="left:166px;top:589px" width="16" height="16" viewBox="0 0 16 16" shape-rendering="crispEdges"><rect x="4" y="6" width="7" height="1" fill="#000"/><rect x="5" y="7" width="5" height="1" fill="#000"/><rect x="6" y="8" width="3" height="1" fill="#000"/><rect x="7" y="9" width="1" height="1" fill="#000"/></svg><div class="a" style="left:12px;top:164px;width:154px;height:441px;overflow:hidden"><div class="a" style="left:8px;top:12px;width:1px;height:394px;background:repeating-linear-gradient(#808080 0 1px,transparent 1px 2px)"></div><div class="a" style="left:28px;top:16px;width:1px;height:279px;background:repeating-linear-gradient(#808080 0 1px,transparent 1px 2px)"></div><div class="a" style="left:28px;top:416px;width:1px;height:40px;background:repeating-linear-gradient(#808080 0 1px,transparent 1px 2px)"></div><div class="a" style="left:9px;top:6px;width:14px;height:1px;background:repeating-linear-gradient(90deg,#808080 0 1px,transparent 1px 2px)"></div><div class="a t" style="left:26px;top:2px;color:#000;">Current</div><div class="a" style="left:4px;top:2px;width:9px;height:9px;border:1px solid #808080;background:#fff"></div><div class="a" style="left:6px;top:6px;width:5px;height:1px;background:#000"></div><div class="a" style="left:29px;top:22px;width:14px;height:1px;background:repeating-linear-gradient(90deg,#808080 0 1px,transparent 1px 2px)"></div><div class="a t" style="left:46px;top:18px;color:#000;">R0</div><div class="a t" style="left:121px;top:18px;color:#000">0x0...</div><div class="a" style="left:29px;top:38px;width:14px;height:1px;background:repeating-linear-gradient(90deg,#808080 0 1px,transparent 1px 2px)"></div><div class="a" style="left:43px;top:32px;width:111px;height:16px;background:#0a246a"></div><div class="a t" style="left:46px;top:34px;color:#fff;">R1</div><div class="a t" style="left:121px;top:34px;color:#fff">0x0...</div><div class="a" style="left:29px;top:54px;width:14px;height:1px;background:repeating-linear-gradient(90deg,#808080 0 1px,transparent 1px 2px)"></div><div class="a t" style="left:46px;top:50px;color:#000;">R2</div><div class="a t" style="left:121px;top:50px;color:#000">0x0...</div><div class="a" style="left:29px;top:70px;width:14px;height:1px;background:repeating-linear-gradient(90deg,#808080 0 1px,transparent 1px 2px)"></div><div class="a" style="left:43px;top:64px;width:111px;height:16px;background:#0a246a"></div><div class="a t" style="left:46px;top:66px;color:#fff;">R3</div><div class="a t" style="left:121px;top:66px;color:#fff">0x3...</div><div class="a" style="left:29px;top:86px;width:14px;height:1px;background:repeating-linear-gradient(90deg,#808080 0 1px,transparent 1px 2px)"></div><div class="a" style="left:43px;top:80px;width:111px;height:16px;background:#0a246a"></div><div class="a t" style="left:46px;top:82px;color:#fff;">R4</div><div class="a t" style="left:121px;top:82px;color:#fff">0x4...</div><div class="a" style="left:29px;top:102px;width:14px;height:1px;background:repeating-linear-gradient(90deg,#808080 0 1px,transparent 1px 2px)"></div><div class="a" style="left:43px;top:96px;width:111px;height:16px;background:#0a246a"></div><div class="a t" style="left:46px;top:98px;color:#fff;">R5</div><div class="a t" style="left:121px;top:98px;color:#fff">0x0...</div><div class="a" style="left:29px;top:118px;width:14px;height:1px;background:repeating-linear-gradient(90deg,#808080 0 1px,transparent 1px 2px)"></div><div class="a" style="left:43px;top:112px;width:111px;height:16px;background:#0a246a"></div><div class="a t" style="left:46px;top:114px;color:#fff;">R6</div><div class="a t" style="left:121px;top:114px;color:#fff">0xe...</div><div class="a" style="left:29px;top:134px;width:14px;height:1px;background:repeating-linear-gradient(90deg,#808080 0 1px,transparent 1px 2px)"></div><div class="a" style="left:43px;top:128px;width:111px;height:16px;background:#0a246a"></div><div class="a t" style="left:46px;top:130px;color:#fff;">R7</div><div class="a t" style="left:121px;top:130px;color:#fff">0xc...</div><div class="a" style="left:29px;top:150px;width:14px;height:1px;background:repeating-linear-gradient(90deg,#808080 0 1px,transparent 1px 2px)"></div><div class="a" style="left:43px;top:144px;width:111px;height:16px;background:#0a246a"></div><div class="a t" style="left:46px;top:146px;color:#fff;">R8</div><div class="a t" style="left:121px;top:146px;color:#fff">0xe...</div><div class="a" style="left:29px;top:166px;width:14px;height:1px;background:repeating-linear-gradient(90deg,#808080 0 1px,transparent 1px 2px)"></div><div class="a" style="left:43px;top:160px;width:111px;height:16px;background:#0a246a"></div><div class="a t" style="left:46px;top:162px;color:#fff;">R9</div><div class="a t" style="left:121px;top:162px;color:#fff">0x6...</div><div class="a" style="left:29px;top:182px;width:14px;height:1px;background:repeating-linear-gradient(90deg,#808080 0 1px,transparent 1px 2px)"></div><div class="a" style="left:43px;top:176px;width:111px;height:16px;background:#0a246a"></div><div class="a t" style="left:46px;top:178px;color:#fff;">R10</div><div class="a t" style="left:121px;top:178px;color:#fff">0x3...</div><div class="a" style="left:29px;top:198px;width:14px;height:1px;background:repeating-linear-gradient(90deg,#808080 0 1px,transparent 1px 2px)"></div><div class="a" style="left:43px;top:192px;width:111px;height:16px;background:#0a246a"></div><div class="a t" style="left:46px;top:194px;color:#fff;">R11</div><div class="a t" style="left:121px;top:194px;color:#fff">0x4...</div><div class="a" style="left:29px;top:214px;width:14px;height:1px;background:repeating-linear-gradient(90deg,#808080 0 1px,transparent 1px 2px)"></div><div class="a" style="left:43px;top:208px;width:111px;height:16px;background:#0a246a"></div><div class="a t" style="left:46px;top:210px;color:#fff;">R12</div><div class="a t" style="left:121px;top:210px;color:#fff">0xff...</div><div class="a" style="left:29px;top:230px;width:14px;height:1px;background:repeating-linear-gradient(90deg,#808080 0 1px,transparent 1px 2px)"></div><div class="a" style="left:43px;top:224px;width:111px;height:16px;background:#0a246a"></div><div class="a t" style="left:46px;top:226px;color:#fff;">R13 (SP)</div><div class="a t" style="left:121px;top:226px;color:#fff">0x4...</div><div class="a" style="left:29px;top:246px;width:14px;height:1px;background:repeating-linear-gradient(90deg,#808080 0 1px,transparent 1px 2px)"></div><div class="a" style="left:43px;top:240px;width:111px;height:16px;background:#0a246a"></div><div class="a t" style="left:46px;top:242px;color:#fff;">R14 (LR)</div><div class="a t" style="left:121px;top:242px;color:#fff">0x7...</div><div class="a" style="left:29px;top:262px;width:14px;height:1px;background:repeating-linear-gradient(90deg,#808080 0 1px,transparent 1px 2px)"></div><div class="a" style="left:43px;top:256px;width:111px;height:16px;background:#0a246a"></div><div class="a t" style="left:46px;top:258px;color:#fff;">R15 (PC)</div><div class="a t" style="left:121px;top:258px;color:#fff">0x0...</div><div class="a" style="left:29px;top:278px;width:14px;height:1px;background:repeating-linear-gradient(90deg,#808080 0 1px,transparent 1px 2px)"></div><div class="a" style="left:43px;top:272px;width:111px;height:16px;background:#0a246a"></div><div class="a t" style="left:46px;top:274px;color:#fff;">CPSR</div><div class="a t" style="left:121px;top:274px;color:#fff">0x1...</div><div class="a" style="left:24px;top:274px;width:9px;height:9px;border:1px solid #808080;background:#fff"></div><div class="a" style="left:26px;top:278px;width:5px;height:1px;background:#000"></div><div class="a" style="left:28px;top:276px;width:1px;height:5px;background:#000"></div><div class="a" style="left:29px;top:294px;width:14px;height:1px;background:repeating-linear-gradient(90deg,#808080 0 1px,transparent 1px 2px)"></div><div class="a" style="left:43px;top:288px;width:111px;height:16px;background:#0a246a"></div><div class="a t" style="left:46px;top:290px;color:#fff;">SPSR</div><div class="a t" style="left:121px;top:290px;color:#fff">0x0...</div><div class="a" style="left:24px;top:290px;width:9px;height:9px;border:1px solid #808080;background:#fff"></div><div class="a" style="left:26px;top:294px;width:5px;height:1px;background:#000"></div><div class="a" style="left:28px;top:292px;width:1px;height:5px;background:#000"></div><div class="a" style="left:9px;top:310px;width:14px;height:1px;background:repeating-linear-gradient(90deg,#808080 0 1px,transparent 1px 2px)"></div><div class="a t" style="left:26px;top:306px;color:#000;">User/System</div><div class="a" style="left:4px;top:306px;width:9px;height:9px;border:1px solid #808080;background:#fff"></div><div class="a" style="left:6px;top:310px;width:5px;height:1px;background:#000"></div><div class="a" style="left:8px;top:308px;width:1px;height:5px;background:#000"></div><div class="a" style="left:9px;top:326px;width:14px;height:1px;background:repeating-linear-gradient(90deg,#808080 0 1px,transparent 1px 2px)"></div><div class="a t" style="left:26px;top:322px;color:#000;">Fast Interrupt</div><div class="a" style="left:4px;top:322px;width:9px;height:9px;border:1px solid #808080;background:#fff"></div><div class="a" style="left:6px;top:326px;width:5px;height:1px;background:#000"></div><div class="a" style="left:8px;top:324px;width:1px;height:5px;background:#000"></div><div class="a" style="left:9px;top:342px;width:14px;height:1px;background:repeating-linear-gradient(90deg,#808080 0 1px,transparent 1px 2px)"></div><div class="a t" style="left:26px;top:338px;color:#000;">Interrupt</div><div class="a" style="left:4px;top:338px;width:9px;height:9px;border:1px solid #808080;background:#fff"></div><div class="a" style="left:6px;top:342px;width:5px;height:1px;background:#000"></div><div class="a" style="left:8px;top:340px;width:1px;height:5px;background:#000"></div><div class="a" style="left:9px;top:358px;width:14px;height:1px;background:repeating-linear-gradient(90deg,#808080 0 1px,transparent 1px 2px)"></div><div class="a t" style="left:26px;top:354px;color:#000;font-weight:bold;">Supervisor</div><div class="a" style="left:4px;top:354px;width:9px;height:9px;border:1px solid #808080;background:#fff"></div><div class="a" style="left:6px;top:358px;width:5px;height:1px;background:#000"></div><div class="a" style="left:8px;top:356px;width:1px;height:5px;background:#000"></div><div class="a" style="left:9px;top:374px;width:14px;height:1px;background:repeating-linear-gradient(90deg,#808080 0 1px,transparent 1px 2px)"></div><div class="a t" style="left:26px;top:370px;color:#000;">Abort</div><div class="a" style="left:4px;top:370px;width:9px;height:9px;border:1px solid #808080;background:#fff"></div><div class="a" style="left:6px;top:374px;width:5px;height:1px;background:#000"></div><div class="a" style="left:8px;top:372px;width:1px;height:5px;background:#000"></div><div class="a" style="left:9px;top:390px;width:14px;height:1px;background:repeating-linear-gradient(90deg,#808080 0 1px,transparent 1px 2px)"></div><div class="a t" style="left:26px;top:386px;color:#000;">Undefined</div><div class="a" style="left:4px;top:386px;width:9px;height:9px;border:1px solid #808080;background:#fff"></div><div class="a" style="left:6px;top:390px;width:5px;height:1px;background:#000"></div><div class="a" style="left:8px;top:388px;width:1px;height:5px;background:#000"></div><div class="a" style="left:9px;top:406px;width:14px;height:1px;background:repeating-linear-gradient(90deg,#808080 0 1px,transparent 1px 2px)"></div><div class="a t" style="left:26px;top:402px;color:#000;">Internal</div><div class="a" style="left:4px;top:402px;width:9px;height:9px;border:1px solid #808080;background:#fff"></div><div class="a" style="left:6px;top:406px;width:5px;height:1px;background:#000"></div><div class="a" style="left:29px;top:422px;width:14px;height:1px;background:repeating-linear-gradient(90deg,#808080 0 1px,transparent 1px 2px)"></div><div class="a t" style="left:46px;top:418px;color:#000;">PC  $</div><div class="a t" style="left:121px;top:418px;color:#000">0x0...</div><div class="a" style="left:29px;top:438px;width:14px;height:1px;background:repeating-linear-gradient(90deg,#808080 0 1px,transparent 1px 2px)"></div><div class="a" style="left:43px;top:432px;width:111px;height:16px;background:#0a246a"></div><div class="a t" style="left:46px;top:434px;color:#fff;">Mode</div><div class="a t" style="left:121px;top:434px;color:#fff">Sup...</div></div><div class="a " style="left:12px;top:608px;width:169px;height:1px;background:#000"></div><div class="a " style="left:12px;top:609px;width:169px;height:23px;background:#fff"></div><div class="a " style="left:50px;top:608px;width:30px;height:24px;background:#d4d0c8;border-bottom:1px solid #000;border-right:1px solid #000;border-left:1px solid #fff"></div><svg style="left:25px;top:612px" width="15" height="16" viewBox="0 0 15 16" shape-rendering="crispEdges"><path d="M1 15.5H14.5V5" fill="none" stroke="#008080"/><path d="M0.5 0.5H9.5L13.5 4.5V14.5H0.5Z" fill="#fff" stroke="#000"/><path d="M1.5 13.5H12.5V5.5M1.5 1.5V13.5M9.5 1V4.5H13" fill="none" stroke="#800080"/><path d="M3 3.5H8M3 6.5H11M3 9H11M3 11.5H11" stroke="#000"/></svg><svg style="left:58px;top:612px" width="14" height="13" viewBox="0 0 14 13" shape-rendering="crispEdges"><rect x="0" y="0" width="13" height="3" fill="#0000c0"/><rect x="0" y="5" width="13" height="3" fill="#0000c0"/><rect x="0" y="10" width="13" height="3" fill="#0000c0"/><path d="M1 1.5H12M1 6.5H12M1 11.5H12" stroke="#00e0ff" stroke-dasharray="1 1"/></svg><svg style="left:87px;top:611px" width="16" height="17" viewBox="0 0 16 17" shape-rendering="crispEdges"><path d="M1.5 2.5Q4 0 7.5 3.5V15.5Q4 13 1.5 14.5Z" fill="#fff" stroke="#000"/><path d="M7.5 3.5Q10 1 14.5 3.5V14.5Q10 13 7.5 15.5Z" fill="#fff" stroke="#000"/><rect x="9" y="4" width="3" height="9" fill="#ffff60"/><path d="M2 15.5Q4 14 7.5 16.5Q11 14 15.5 15.5" fill="none" stroke="#800080" stroke-width="1.5"/><path d="M15 4V15" stroke="#800080"/></svg><div class="a " style="left:110px;top:611px;width:1px;height:18px;background:#808080"></div><svg style="left:117px;top:612px" width="16" height="15" viewBox="0 0 16 15" shape-rendering="crispEdges"><path d="M0 1H3V0L6 3L3 6V5H0Z" fill="#000080"/><rect x="0" y="0" width="3" height="6" fill="#000080"/><path d="M0 4L3 7" stroke="#ff0"/><rect x="8" y="2" width="2" height="1" fill="#0000ff"/><rect x="7" y="3" width="2" height="4" fill="#0000ff"/><rect x="6" y="7" width="2" height="1" fill="#0000ff"/><rect x="7" y="8" width="2" height="4" fill="#0000ff"/><rect x="8" y="12" width="2" height="1" fill="#0000ff"/><rect x="11" y="2" width="2" height="1" fill="#0000ff"/><rect x="12" y="3" width="2" height="4" fill="#0000ff"/><rect x="13" y="7" width="2" height="1" fill="#0000ff"/><rect x="12" y="8" width="2" height="4" fill="#0000ff"/><rect x="11" y="12" width="2" height="1" fill="#0000ff"/></svg><div class="a " style="left:141px;top:611px;width:1px;height:18px;background:#808080"></div><svg style="left:148px;top:612px" width="17" height="16" viewBox="0 0 17 16" shape-rendering="crispEdges"><path d="M0.5 0.5H15.5V5.5L13.5 7.5H2.5L0.5 5.5Z" fill="#ffff60" stroke="#000"/><path d="M3 2H13M3 4H13" stroke="#000" stroke-dasharray="1 1"/><path d="M5 8L10 14M8 8L12 12M11 8L13 10" stroke="#000"/><rect x="15" y="12" width="1" height="1" fill="#000"/></svg><div class="a " style="left:175px;top:611px;width:1px;height:18px;background:#808080"></div><div class="a " style="left:7px;top:639px;width:181px;height:1px;background:#fff"></div><div class="a " style="left:7px;top:644px;width:181px;height:1px;background:#000"></div><div class="a " style="left:9px;top:647px;width:176px;height:15px;border:1px solid #a8a59f;border-radius:2px"></div><div class="a t " style="left:13px;top:648px;">Symbols</div><svg style="left:161px;top:653px" width="5" height="3" viewBox="0 0 5 3" shape-rendering="crispEdges"><rect x="0" y="2" width="5" height="1" fill="#000"/><rect x="1" y="1" width="3" height="1" fill="#000"/><rect x="2" y="0" width="1" height="1" fill="#000"/></svg><svg style="left:173px;top:652px" width="7" height="6" viewBox="0 0 7 6" shape-rendering="crispEdges"><path d="M0.5 0.5L6 5.5M6 0.5L0.5 5.5" stroke="#000" stroke-width="1.6" shape-rendering="auto"/></svg><div class="a t " style="left:14px;top:670px;">M<span class="u">a</span>sk:</div><div class="a sunk" style="left:58px;top:665px;width:74px;height:19px;background:#fff"></div><div class="a t " style="left:62px;top:667px;font-size:9px">*</div><div class="a sunk" style="left:148px;top:668px;width:13px;height:13px;background:#fff"></div><div class="a t " style="left:166px;top:670px;"><span class="u">C</span>as</div><div class="a " style="left:187px;top:125px;width:1px;height:559px;background:#fff"></div><div class="a " style="left:192px;top:125px;width:1px;height:559px;background:#000"></div><div class="a " style="left:195px;top:125px;width:1055px;height:2px;background:#808080"></div><div class="a " style="left:195px;top:125px;width:2px;height:531px;background:#808080"></div><div class="a " style="left:197px;top:127px;width:1051px;height:1px;background:#000"></div><div class="a " style="left:197px;top:127px;width:1px;height:526px;background:#000"></div><div class="a " style="left:1248px;top:127px;width:2px;height:528px;background:#fff"></div><div class="a " style="left:197px;top:654px;width:1053px;height:1px;background:#fff"></div><div class="a " style="left:195px;top:655px;width:1055px;height:1px;background:#808080"></div><div class="a " style="left:198px;top:128px;width:1034px;height:509px;background:#fff"></div><div class="a dith" style="left:198px;top:128px;width:42px;height:509px;"></div><div class="a" style="left:198px;top:128px;width:1034px;height:509px;overflow:hidden"><div class="a t" style="left:0;width:28px;text-align:right;top:3px">01</div><div class="a m" style="left:42px;top:1px"><span style="color:#008000;font-style:italic;position:relative;top:1px">/******************************************************************************/</span></div><div class="a t" style="left:0;width:28px;text-align:right;top:19px">02</div><div class="a m" style="left:42px;top:17px"><span style="color:#008000;font-style:italic;position:relative;top:1px">/* BLINKY.C: LED Flasher                                                      */</span></div><div class="a t" style="left:0;width:28px;text-align:right;top:35px">03</div><div class="a m" style="left:42px;top:33px"><span style="color:#008000;font-style:italic;position:relative;top:1px">/******************************************************************************/</span></div><div class="a t" style="left:0;width:28px;text-align:right;top:51px">04</div><div class="a m" style="left:42px;top:49px"><span style="color:#008000;font-style:italic;position:relative;top:1px">/* This file is part of the uVision/ARM development tools.                    */</span></div><div class="a t" style="left:0;width:28px;text-align:right;top:67px">05</div><div class="a m" style="left:42px;top:65px"><span style="color:#008000;font-style:italic;position:relative;top:1px">/* Copyright (c) 2005-2006 Keil Software. All rights reserved.                */</span></div><div class="a t" style="left:0;width:28px;text-align:right;top:83px">06</div><div class="a m" style="left:42px;top:81px"><span style="color:#008000;font-style:italic;position:relative;top:1px">/* This software may only be used under the terms of a valid, current,        */</span></div><div class="a t" style="left:0;width:28px;text-align:right;top:99px">07</div><div class="a m" style="left:42px;top:97px"><span style="color:#008000;font-style:italic;position:relative;top:1px">/* end user licence from KEIL for a compatible version of KEIL software       */</span></div><div class="a t" style="left:0;width:28px;text-align:right;top:115px">08</div><div class="a m" style="left:42px;top:113px"><span style="color:#008000;font-style:italic;position:relative;top:1px">/* development tools. Nothing else gives you the right to use this software.  */</span></div><div class="a t" style="left:0;width:28px;text-align:right;top:131px">09</div><div class="a m" style="left:42px;top:129px"><span style="color:#008000;font-style:italic;position:relative;top:1px">/******************************************************************************/</span></div><div class="a t" style="left:0;width:28px;text-align:right;top:147px">10</div><div class="a t" style="left:0;width:28px;text-align:right;top:163px">11</div><div class="a m" style="left:42px;top:161px"><span style="color:#000080">#include</span><span style="color:#000"> </span><span style="color:#000080">&lt;</span><span style="color:#000">LPC22xx.H</span><span style="color:#000080">&gt;</span><span style="color:#000">                       </span><span style="color:#008000;font-style:italic;position:relative;top:1px">/* LPC22xx definitions */</span></div><div class="a t" style="left:0;width:28px;text-align:right;top:179px">12</div><div class="a t" style="left:0;width:28px;text-align:right;top:195px">13</div><div class="a m" style="left:42px;top:193px"><span style="color:#000;font-weight:bold">void</span><span style="color:#000"> wait </span><span style="color:#000080">(</span><span style="color:#000;font-weight:bold">void</span><span style="color:#000080">)</span><span style="color:#000">  </span><span style="color:#000080">{</span></div><div class="a t" style="left:0;width:28px;text-align:right;top:211px">14</div><div class="a m" style="left:42px;top:209px"><span style="color:#000">  </span><span style="color:#000;font-weight:bold">int</span><span style="color:#000">  d</span><span style="color:#000080">;</span></div><div class="a t" style="left:0;width:28px;text-align:right;top:227px">15</div><div class="a t" style="left:0;width:28px;text-align:right;top:243px">16</div><div class="a m" style="left:42px;top:241px"><span style="color:#000">  </span><span style="color:#000;font-weight:bold">for</span><span style="color:#000"> </span><span style="color:#000080">(</span><span style="color:#000">d </span><span style="color:#000080">=</span><span style="color:#000"> </span><span style="color:#800080">0</span><span style="color:#000080">;</span><span style="color:#000"> d </span><span style="color:#000080">&lt;</span><span style="color:#000"> </span><span style="color:#800080">1000000</span><span style="color:#000080">;</span><span style="color:#000"> d</span><span style="color:#000080">++);</span></div><div class="a t" style="left:0;width:28px;text-align:right;top:259px">17</div><div class="a m" style="left:42px;top:257px"><span style="color:#000080">}</span></div><div class="a t" style="left:0;width:28px;text-align:right;top:275px">18</div><div class="a t" style="left:0;width:28px;text-align:right;top:291px">19</div><div class="a m" style="left:42px;top:289px"><span style="color:#000;font-weight:bold">int</span><span style="color:#000"> main </span><span style="color:#000080">(</span><span style="color:#000;font-weight:bold">void</span><span style="color:#000080">)</span><span style="color:#000"> </span><span style="color:#000080">{</span></div><div class="a t" style="left:0;width:28px;text-align:right;top:307px">20</div><div class="a m" style="left:42px;top:305px"><span style="color:#000">  </span><span style="color:#000;font-weight:bold">unsigned</span><span style="color:#000"> </span><span style="color:#000;font-weight:bold">int</span><span style="color:#000"> i</span><span style="color:#000080">;</span></div><div class="a t" style="left:0;width:28px;text-align:right;top:323px">21</div><div class="a t" style="left:0;width:28px;text-align:right;top:339px">22</div><div class="a m" style="left:42px;top:337px"><span style="color:#000">IO0DIR </span><span style="color:#000080">=</span><span style="color:#000"> </span><span style="color:#800080">0xFF000000</span><span style="color:#000080">;</span><span style="color:#000">                     </span><span style="color:#008000;font-style:italic;position:relative;top:1px">/* P0.24..30 defined as Outputs */</span></div><div class="a t" style="left:0;width:28px;text-align:right;top:355px">23</div><div class="a t" style="left:0;width:28px;text-align:right;top:371px">24</div><div class="a m" style="left:42px;top:369px"><span style="color:#000">  </span><span style="color:#000;font-weight:bold">while</span><span style="color:#000"> </span><span style="color:#000080">(</span><span style="color:#800080">1</span><span style="color:#000080">)</span><span style="color:#000">  </span><span style="color:#000080">{</span><span style="color:#000">                             </span><span style="color:#008000;font-style:italic;position:relative;top:1px">/* Loop forever */</span></div><div class="a t" style="left:0;width:28px;text-align:right;top:387px">25</div><div class="a m" style="left:42px;top:385px"><span style="color:#000">   IO0SET </span><span style="color:#000080">=</span><span style="color:#000"> </span><span style="color:#800080">1</span><span style="color:#000080">&lt;&lt;</span><span style="color:#800080">30</span><span style="color:#000080">;</span><span style="color:#000">                          </span><span style="color:#008000;font-style:italic;position:relative;top:1px">/* Turn on LED */</span></div><div class="a t" style="left:0;width:28px;text-align:right;top:403px">26</div><div class="a m" style="left:42px;top:401px"><span style="color:#000">   wait </span><span style="color:#000080">();</span><span style="color:#000">                             </span><span style="color:#008000;font-style:italic;position:relative;top:1px">/* call wait function */</span></div><div class="a t" style="left:0;width:28px;text-align:right;top:419px">27</div><div class="a m" style="left:42px;top:417px"><span style="color:#000">   IO0CLR </span><span style="color:#000080">=</span><span style="color:#000"> </span><span style="color:#800080">1</span><span style="color:#000080">&lt;&lt;</span><span style="color:#800080">30</span><span style="color:#000080">;</span><span style="color:#000">                          </span><span style="color:#008000;font-style:italic;position:relative;top:1px">/* Turn off LED */</span></div><div class="a t" style="left:0;width:28px;text-align:right;top:435px">28</div><div class="a m" style="left:42px;top:433px"><span style="color:#000">   wait </span><span style="color:#000080">();</span><span style="color:#000">                             </span><span style="color:#008000;font-style:italic;position:relative;top:1px">/* call wait function */</span></div><div class="a t" style="left:0;width:28px;text-align:right;top:451px">29</div><div class="a m" style="left:42px;top:449px"><span style="color:#000">  </span><span style="color:#000080">}</span><span style="color:#000">                            </span><span style="color:#008000;font-style:italic;position:relative;top:1px">/* call wait function */</span></div><div class="a t" style="left:0;width:28px;text-align:right;top:467px">30</div><div class="a t" style="left:0;width:28px;text-align:right;top:483px">31</div><div class="a m" style="left:42px;top:481px"><span style="color:#000080">}</span></div><div class="a t" style="left:0;width:28px;text-align:right;top:499px">32</div><div class="a" style="left:0;top:240px;width:15px;height:16px;background:#c0c0c0"></div><div class="a" style="left:0;top:256px;width:15px;height:16px;background:#c0c0c0"></div><div class="a" style="left:0;top:288px;width:15px;height:16px;background:#c0c0c0"></div><div class="a" style="left:0;top:336px;width:15px;height:16px;background:#c0c0c0"></div><div class="a" style="left:0;top:368px;width:15px;height:16px;background:#c0c0c0"></div><div class="a" style="left:0;top:400px;width:15px;height:16px;background:#c0c0c0"></div><div class="a" style="left:0;top:416px;width:15px;height:16px;background:#c0c0c0"></div><div class="a" style="left:0;top:432px;width:15px;height:16px;background:#c0c0c0"></div><div class="a" style="left:3px;top:385px;width:10px;height:14px;background:#f00;border:1px solid #000;border-radius:1px"></div><div class="a" style="left:29px;top:2px;width:11px;height:13px;border:1px solid #808080"></div><div class="a" style="left:31px;top:8px;width:7px;height:1px;background:#808080"></div><div class="a" style="left:34px;top:17px;width:1px;height:167px;background:#808080"></div><div class="a" style="left:34px;top:184px;width:8px;height:1px;background:#808080"></div><div class="a" style="left:29px;top:194px;width:11px;height:13px;border:1px solid #808080"></div><div class="a" style="left:31px;top:200px;width:7px;height:1px;background:#808080"></div><div class="a" style="left:34px;top:209px;width:1px;height:71px;background:#808080"></div><div class="a" style="left:34px;top:280px;width:8px;height:1px;background:#808080"></div><div class="a" style="left:29px;top:290px;width:11px;height:13px;border:1px solid #808080"></div><div class="a" style="left:31px;top:296px;width:7px;height:1px;background:#808080"></div><div class="a" style="left:34px;top:305px;width:1px;height:199px;background:#808080"></div><div class="a" style="left:34px;top:504px;width:8px;height:1px;background:#808080"></div></div><div class="a " style="left:1232px;top:128px;width:16px;height:509px;background:#d4d0c8"></div><div class="a raised" style="left:1232px;top:128px;width:16px;height:7px;"></div><div class="a raised" style="left:1232px;top:135px;width:16px;height:16px;"></div><svg style="left:1232px;top:135px" width="16" height="16" viewBox="0 0 16 16" shape-rendering="crispEdges"><rect x="4" y="9" width="7" height="1" fill="#000"/><rect x="5" y="8" width="5" height="1" fill="#000"/><rect x="6" y="7" width="3" height="1" fill="#000"/><rect x="7" y="6" width="1" height="1" fill="#000"/></svg><div class="a raised" style="left:1232px;top:151px;width:16px;height:455px;"></div><div class="a dith" style="left:1232px;top:606px;width:16px;height:15px;"></div><div class="a raised" style="left:1232px;top:621px;width:16px;height:16px;"></div><svg style="left:1232px;top:621px" width="16" height="16" viewBox="0 0 16 16" shape-rendering="crispEdges"><rect x="4" y="6" width="7" height="1" fill="#000"/><rect x="5" y="7" width="5" height="1" fill="#000"/><rect x="6" y="8" width="3" height="1" fill="#000"/><rect x="7" y="9" width="1" height="1" fill="#000"/></svg><div class="a dith" style="left:198px;top:637px;width:1034px;height:16px;"></div><div class="a raised" style="left:198px;top:637px;width:7px;height:16px;"></div><div class="a raised" style="left:205px;top:637px;width:16px;height:16px;"></div><svg style="left:205px;top:637px" width="16" height="16" viewBox="0 0 16 16" shape-rendering="crispEdges"><rect x="9" y="4" width="1" height="7" fill="#000"/><rect x="8" y="5" width="1" height="5" fill="#000"/><rect x="7" y="6" width="1" height="3" fill="#000"/><rect x="6" y="7" width="1" height="1" fill="#000"/></svg><div class="a raised" style="left:221px;top:637px;width:60px;height:16px;"></div><div class="a raised" style="left:1216px;top:637px;width:16px;height:16px;"></div><svg style="left:1216px;top:637px" width="16" height="16" viewBox="0 0 16 16" shape-rendering="crispEdges"><rect x="6" y="4" width="1" height="7" fill="#000"/><rect x="7" y="5" width="1" height="5" fill="#000"/><rect x="8" y="6" width="1" height="3" fill="#000"/><rect x="9" y="7" width="1" height="1" fill="#000"/></svg><div class="a " style="left:1232px;top:637px;width:16px;height:16px;background:#d4d0c8"></div><div class="a " style="left:193px;top:658px;width:4px;height:25px;background:#fff"></div><div class="a " style="left:285px;top:658px;width:966px;height:1px;background:#000"></div><div class="a " style="left:286px;top:659px;width:969px;height:24px;background:#fff"></div><div class="a " style="left:197px;top:680px;width:89px;height:1px;background:#000"></div><div class="a " style="left:285px;top:658px;width:1px;height:23px;background:#000"></div><svg style="left:200px;top:663px" width="15" height="16" viewBox="0 0 15 16" shape-rendering="crispEdges"><path d="M1 15.5H14.5V5" fill="none" stroke="#008080"/><path d="M0.5 0.5H9.5L13.5 4.5V14.5H0.5Z" fill="#fff" stroke="#000"/><path d="M1.5 13.5H12.5V5.5M1.5 1.5V13.5M9.5 1V4.5H13" fill="none" stroke="#800080"/><path d="M3 3.5H8M3 6.5H11M3 9H11M3 11.5H11" stroke="#000"/></svg><div class="a t " style="left:232px;top:665px;">Blinky.c</div><svg style="left:290px;top:663px" width="15" height="16" viewBox="0 0 15 16" shape-rendering="crispEdges"><path d="M1 15.5H14.5V5" fill="none" stroke="#008080"/><path d="M0.5 0.5H9.5L13.5 4.5V14.5H0.5Z" fill="#fff" stroke="#000"/><path d="M1.5 13.5H12.5V5.5M1.5 1.5V13.5M9.5 1V4.5H13" fill="none" stroke="#800080"/><path d="M3 3.5H8M3 6.5H11M3 9H11M3 11.5H11" stroke="#000"/></svg><div class="a t " style="left:313px;top:665px;">Abstract.txt</div><div class="a " style="left:375px;top:662px;width:1px;height:17px;background:#808080"></div><svg style="left:379px;top:663px" width="15" height="16" viewBox="0 0 15 16" shape-rendering="crispEdges"><path d="M1 15.5H14.5V5" fill="none" stroke="#008080"/><path d="M0.5 0.5H9.5L13.5 4.5V14.5H0.5Z" fill="#fff" stroke="#000"/><path d="M1.5 13.5H12.5V5.5M1.5 1.5V13.5M9.5 1V4.5H13" fill="none" stroke="#800080"/><path d="M3 3.5H8M3 6.5H11M3 9H11M3 11.5H11" stroke="#000"/></svg><div class="a t " style="left:404px;top:665px;">LPC22xx.H</div><div class="a " style="left:465px;top:662px;width:1px;height:17px;background:#808080"></div><svg style="left:469px;top:663px" width="15" height="16" viewBox="0 0 15 16" shape-rendering="crispEdges"><path d="M1 15.5H14.5V5" fill="none" stroke="#008080"/><path d="M0.5 0.5H9.5L13.5 4.5V14.5H0.5Z" fill="#fff" stroke="#000"/><path d="M1.5 13.5H12.5V5.5M1.5 1.5V13.5M9.5 1V4.5H13" fill="none" stroke="#800080"/><path d="M3 3.5H8M3 6.5H11M3 9H11M3 11.5H11" stroke="#000"/></svg><div class="a t " style="left:499px;top:665px;">Startup.s</div><div class="a " style="left:555px;top:662px;width:1px;height:17px;background:#808080"></div><svg style="left:558px;top:663px" width="18" height="17" viewBox="0 0 18 17" shape-rendering="crispEdges"><path d="M0.5 6.5H6L9.5 10V16.5H0.5Z" fill="#fff" stroke="#000"/><path d="M2 10H7M2 12H7M2 14H7" stroke="#000"/><circle cx="9" cy="6" r="5" fill="#40c0c0" stroke="#000" stroke-width="1.3"/><rect x="6" y="4" width="5" height="3" fill="#fff" stroke="#000"/><path d="M12.5 9.5L16.5 14" stroke="#807000" stroke-width="2.5"/></svg><div class="a t " style="left:581px;top:665px;letter-spacing:-0.3px">Disassembly</div><div class="a " style="left:645px;top:662px;width:1px;height:17px;background:#808080"></div><div class="a " style="left:193px;top:683px;width:1062px;height:1px;background:#808080"></div><div class="a " style="left:7px;top:684px;width:1248px;height:1px;background:#fff"></div><div class="a " style="left:7px;top:683px;width:186px;height:1px;background:#808080"></div><div class="a " style="left:7px;top:689px;width:1248px;height:1px;background:#000"></div><div class="a " style="left:556px;top:313px;width:573px;height:145px;background:#d4d0c8;box-shadow:inset 1px 1px #d4d0c8,inset -1px -1px #404040,inset 2px 2px #fff,inset -2px -2px #808080"></div><div class="a " style="left:559px;top:316px;width:567px;height:18px;background:linear-gradient(90deg,#0a246a,#a6caf0)"></div><div class="a t " style="left:561px;top:319px;color:#fff;font-weight:bold;letter-spacing:0.55px">General Purpose Input/Output 0 (GPIO 0)</div><div class="a raised" style="left:1108px;top:318px;width:16px;height:14px;"></div><svg style="left:1108px;top:318px" width="16" height="14"><path d="M4.5 3.5L10.5 9.5M10.5 3.5L4.5 9.5M5.5 3.5L11.5 9.5M11.5 3.5L5.5 9.5" stroke="#000" stroke-width="1" fill="none" shape-rendering="crispEdges"/></svg><div class="a " style="left:565px;top:341px;width:555px;height:108px;border:1px solid #808080;box-shadow:inset 1px 1px #fff,1px 1px #fff"></div><div class="a " style="left:572px;top:336px;width:36px;height:12px;background:#d4d0c8"></div><div class="a t " style="left:574px;top:336px;">GPIO0</div><div class="a t" style="left:559px;width:54px;text-align:right;top:355px">IO0DIR:</div><div class="a sunk" style="left:616px;top:351px;width:80px;height:20px;background:#fff"></div><div class="a t " style="left:619px;top:355px;">0x02666FA8</div><div class="a sunk" style="left:706px;top:358px;width:13px;height:13px;background:#fff"></div><div class="a sunk" style="left:718px;top:358px;width:13px;height:13px;background:#fff"></div><div class="a sunk" style="left:730px;top:358px;width:13px;height:13px;background:#fff"></div><div class="a sunk" style="left:742px;top:358px;width:13px;height:13px;background:#fff"></div><div class="a sunk" style="left:754px;top:358px;width:13px;height:13px;background:#fff"></div><div class="a sunk" style="left:766px;top:358px;width:13px;height:13px;background:#fff"></div><div class="a sunk" style="left:778px;top:358px;width:13px;height:13px;background:#fff"></div><svg style="left:778px;top:358px" width="13" height="13" viewBox="0 0 13 13" shape-rendering="crispEdges"><rect x="3" y="5" width="1" height="3" fill="#000"/><rect x="4" y="6" width="1" height="3" fill="#000"/><rect x="5" y="7" width="1" height="3" fill="#000"/><rect x="6" y="6" width="1" height="3" fill="#000"/><rect x="7" y="5" width="1" height="3" fill="#000"/><rect x="8" y="4" width="1" height="3" fill="#000"/><rect x="9" y="3" width="1" height="3" fill="#000"/></svg><div class="a sunk" style="left:790px;top:358px;width:13px;height:13px;background:#fff"></div><div class="a sunk" style="left:808px;top:358px;width:13px;height:13px;background:#fff"></div><div class="a sunk" style="left:820px;top:358px;width:13px;height:13px;background:#fff"></div><svg style="left:820px;top:358px" width="13" height="13" viewBox="0 0 13 13" shape-rendering="crispEdges"><rect x="3" y="5" width="1" height="3" fill="#000"/><rect x="4" y="6" width="1" height="3" fill="#000"/><rect x="5" y="7" width="1" height="3" fill="#000"/><rect x="6" y="6" width="1" height="3" fill="#000"/><rect x="7" y="5" width="1" height="3" fill="#000"/><rect x="8" y="4" width="1" height="3" fill="#000"/><rect x="9" y="3" width="1" height="3" fill="#000"/></svg><div class="a sunk" style="left:832px;top:358px;width:13px;height:13px;background:#fff"></div><svg style="left:832px;top:358px" width="13" height="13" viewBox="0 0 13 13" shape-rendering="crispEdges"><rect x="3" y="5" width="1" height="3" fill="#000"/><rect x="4" y="6" width="1" height="3" fill="#000"/><rect x="5" y="7" width="1" height="3" fill="#000"/><rect x="6" y="6" width="1" height="3" fill="#000"/><rect x="7" y="5" width="1" height="3" fill="#000"/><rect x="8" y="4" width="1" height="3" fill="#000"/><rect x="9" y="3" width="1" height="3" fill="#000"/></svg><div class="a sunk" style="left:844px;top:358px;width:13px;height:13px;background:#fff"></div><div class="a sunk" style="left:856px;top:358px;width:13px;height:13px;background:#fff"></div><div class="a sunk" style="left:868px;top:358px;width:13px;height:13px;background:#fff"></div><svg style="left:868px;top:358px" width="13" height="13" viewBox="0 0 13 13" shape-rendering="crispEdges"><rect x="3" y="5" width="1" height="3" fill="#000"/><rect x="4" y="6" width="1" height="3" fill="#000"/><rect x="5" y="7" width="1" height="3" fill="#000"/><rect x="6" y="6" width="1" height="3" fill="#000"/><rect x="7" y="5" width="1" height="3" fill="#000"/><rect x="8" y="4" width="1" height="3" fill="#000"/><rect x="9" y="3" width="1" height="3" fill="#000"/></svg><div class="a sunk" style="left:880px;top:358px;width:13px;height:13px;background:#fff"></div><svg style="left:880px;top:358px" width="13" height="13" viewBox="0 0 13 13" shape-rendering="crispEdges"><rect x="3" y="5" width="1" height="3" fill="#000"/><rect x="4" y="6" width="1" height="3" fill="#000"/><rect x="5" y="7" width="1" height="3" fill="#000"/><rect x="6" y="6" width="1" height="3" fill="#000"/><rect x="7" y="5" width="1" height="3" fill="#000"/><rect x="8" y="4" width="1" height="3" fill="#000"/><rect x="9" y="3" width="1" height="3" fill="#000"/></svg><div class="a sunk" style="left:892px;top:358px;width:13px;height:13px;background:#fff"></div><div class="a sunk" style="left:910px;top:358px;width:13px;height:13px;background:#fff"></div><div class="a sunk" style="left:922px;top:358px;width:13px;height:13px;background:#fff"></div><svg style="left:922px;top:358px" width="13" height="13" viewBox="0 0 13 13" shape-rendering="crispEdges"><rect x="3" y="5" width="1" height="3" fill="#000"/><rect x="4" y="6" width="1" height="3" fill="#000"/><rect x="5" y="7" width="1" height="3" fill="#000"/><rect x="6" y="6" width="1" height="3" fill="#000"/><rect x="7" y="5" width="1" height="3" fill="#000"/><rect x="8" y="4" width="1" height="3" fill="#000"/><rect x="9" y="3" width="1" height="3" fill="#000"/></svg><div class="a sunk" style="left:934px;top:358px;width:13px;height:13px;background:#fff"></div><svg style="left:934px;top:358px" width="13" height="13" viewBox="0 0 13 13" shape-rendering="crispEdges"><rect x="3" y="5" width="1" height="3" fill="#000"/><rect x="4" y="6" width="1" height="3" fill="#000"/><rect x="5" y="7" width="1" height="3" fill="#000"/><rect x="6" y="6" width="1" height="3" fill="#000"/><rect x="7" y="5" width="1" height="3" fill="#000"/><rect x="8" y="4" width="1" height="3" fill="#000"/><rect x="9" y="3" width="1" height="3" fill="#000"/></svg><div class="a sunk" style="left:946px;top:358px;width:13px;height:13px;background:#fff"></div><div class="a sunk" style="left:958px;top:358px;width:13px;height:13px;background:#fff"></div><svg style="left:958px;top:358px" width="13" height="13" viewBox="0 0 13 13" shape-rendering="crispEdges"><rect x="3" y="5" width="1" height="3" fill="#000"/><rect x="4" y="6" width="1" height="3" fill="#000"/><rect x="5" y="7" width="1" height="3" fill="#000"/><rect x="6" y="6" width="1" height="3" fill="#000"/><rect x="7" y="5" width="1" height="3" fill="#000"/><rect x="8" y="4" width="1" height="3" fill="#000"/><rect x="9" y="3" width="1" height="3" fill="#000"/></svg><div class="a sunk" style="left:970px;top:358px;width:13px;height:13px;background:#fff"></div><svg style="left:970px;top:358px" width="13" height="13" viewBox="0 0 13 13" shape-rendering="crispEdges"><rect x="3" y="5" width="1" height="3" fill="#000"/><rect x="4" y="6" width="1" height="3" fill="#000"/><rect x="5" y="7" width="1" height="3" fill="#000"/><rect x="6" y="6" width="1" height="3" fill="#000"/><rect x="7" y="5" width="1" height="3" fill="#000"/><rect x="8" y="4" width="1" height="3" fill="#000"/><rect x="9" y="3" width="1" height="3" fill="#000"/></svg><div class="a sunk" style="left:982px;top:358px;width:13px;height:13px;background:#fff"></div><svg style="left:982px;top:358px" width="13" height="13" viewBox="0 0 13 13" shape-rendering="crispEdges"><rect x="3" y="5" width="1" height="3" fill="#000"/><rect x="4" y="6" width="1" height="3" fill="#000"/><rect x="5" y="7" width="1" height="3" fill="#000"/><rect x="6" y="6" width="1" height="3" fill="#000"/><rect x="7" y="5" width="1" height="3" fill="#000"/><rect x="8" y="4" width="1" height="3" fill="#000"/><rect x="9" y="3" width="1" height="3" fill="#000"/></svg><div class="a sunk" style="left:994px;top:358px;width:13px;height:13px;background:#fff"></div><svg style="left:994px;top:358px" width="13" height="13" viewBox="0 0 13 13" shape-rendering="crispEdges"><rect x="3" y="5" width="1" height="3" fill="#000"/><rect x="4" y="6" width="1" height="3" fill="#000"/><rect x="5" y="7" width="1" height="3" fill="#000"/><rect x="6" y="6" width="1" height="3" fill="#000"/><rect x="7" y="5" width="1" height="3" fill="#000"/><rect x="8" y="4" width="1" height="3" fill="#000"/><rect x="9" y="3" width="1" height="3" fill="#000"/></svg><div class="a sunk" style="left:1012px;top:358px;width:13px;height:13px;background:#fff"></div><svg style="left:1012px;top:358px" width="13" height="13" viewBox="0 0 13 13" shape-rendering="crispEdges"><rect x="3" y="5" width="1" height="3" fill="#000"/><rect x="4" y="6" width="1" height="3" fill="#000"/><rect x="5" y="7" width="1" height="3" fill="#000"/><rect x="6" y="6" width="1" height="3" fill="#000"/><rect x="7" y="5" width="1" height="3" fill="#000"/><rect x="8" y="4" width="1" height="3" fill="#000"/><rect x="9" y="3" width="1" height="3" fill="#000"/></svg><div class="a sunk" style="left:1024px;top:358px;width:13px;height:13px;background:#fff"></div><div class="a sunk" style="left:1036px;top:358px;width:13px;height:13px;background:#fff"></div><svg style="left:1036px;top:358px" width="13" height="13" viewBox="0 0 13 13" shape-rendering="crispEdges"><rect x="3" y="5" width="1" height="3" fill="#000"/><rect x="4" y="6" width="1" height="3" fill="#000"/><rect x="5" y="7" width="1" height="3" fill="#000"/><rect x="6" y="6" width="1" height="3" fill="#000"/><rect x="7" y="5" width="1" height="3" fill="#000"/><rect x="8" y="4" width="1" height="3" fill="#000"/><rect x="9" y="3" width="1" height="3" fill="#000"/></svg><div class="a sunk" style="left:1048px;top:358px;width:13px;height:13px;background:#fff"></div><div class="a sunk" style="left:1060px;top:358px;width:13px;height:13px;background:#fff"></div><svg style="left:1060px;top:358px" width="13" height="13" viewBox="0 0 13 13" shape-rendering="crispEdges"><rect x="3" y="5" width="1" height="3" fill="#000"/><rect x="4" y="6" width="1" height="3" fill="#000"/><rect x="5" y="7" width="1" height="3" fill="#000"/><rect x="6" y="6" width="1" height="3" fill="#000"/><rect x="7" y="5" width="1" height="3" fill="#000"/><rect x="8" y="4" width="1" height="3" fill="#000"/><rect x="9" y="3" width="1" height="3" fill="#000"/></svg><div class="a sunk" style="left:1072px;top:358px;width:13px;height:13px;background:#fff"></div><div class="a sunk" style="left:1084px;top:358px;width:13px;height:13px;background:#fff"></div><div class="a sunk" style="left:1096px;top:358px;width:13px;height:13px;background:#fff"></div><div class="a t" style="left:559px;width:54px;text-align:right;top:378px">IO0SET:</div><div class="a sunk" style="left:616px;top:374px;width:80px;height:20px;background:#fff"></div><div class="a t " style="left:619px;top:378px;">0x02666FA8</div><div class="a sunk" style="left:706px;top:381px;width:13px;height:13px;background:#fff"></div><div class="a sunk" style="left:718px;top:381px;width:13px;height:13px;background:#fff"></div><div class="a sunk" style="left:730px;top:381px;width:13px;height:13px;background:#fff"></div><div class="a sunk" style="left:742px;top:381px;width:13px;height:13px;background:#fff"></div><div class="a sunk" style="left:754px;top:381px;width:13px;height:13px;background:#fff"></div><div class="a sunk" style="left:766px;top:381px;width:13px;height:13px;background:#fff"></div><div class="a sunk" style="left:778px;top:381px;width:13px;height:13px;background:#fff"></div><svg style="left:778px;top:381px" width="13" height="13" viewBox="0 0 13 13" shape-rendering="crispEdges"><rect x="3" y="5" width="1" height="3" fill="#000"/><rect x="4" y="6" width="1" height="3" fill="#000"/><rect x="5" y="7" width="1" height="3" fill="#000"/><rect x="6" y="6" width="1" height="3" fill="#000"/><rect x="7" y="5" width="1" height="3" fill="#000"/><rect x="8" y="4" width="1" height="3" fill="#000"/><rect x="9" y="3" width="1" height="3" fill="#000"/></svg><div class="a sunk" style="left:790px;top:381px;width:13px;height:13px;background:#fff"></div><div class="a sunk" style="left:808px;top:381px;width:13px;height:13px;background:#fff"></div><div class="a sunk" style="left:820px;top:381px;width:13px;height:13px;background:#fff"></div><svg style="left:820px;top:381px" width="13" height="13" viewBox="0 0 13 13" shape-rendering="crispEdges"><rect x="3" y="5" width="1" height="3" fill="#000"/><rect x="4" y="6" width="1" height="3" fill="#000"/><rect x="5" y="7" width="1" height="3" fill="#000"/><rect x="6" y="6" width="1" height="3" fill="#000"/><rect x="7" y="5" width="1" height="3" fill="#000"/><rect x="8" y="4" width="1" height="3" fill="#000"/><rect x="9" y="3" width="1" height="3" fill="#000"/></svg><div class="a sunk" style="left:832px;top:381px;width:13px;height:13px;background:#fff"></div><svg style="left:832px;top:381px" width="13" height="13" viewBox="0 0 13 13" shape-rendering="crispEdges"><rect x="3" y="5" width="1" height="3" fill="#000"/><rect x="4" y="6" width="1" height="3" fill="#000"/><rect x="5" y="7" width="1" height="3" fill="#000"/><rect x="6" y="6" width="1" height="3" fill="#000"/><rect x="7" y="5" width="1" height="3" fill="#000"/><rect x="8" y="4" width="1" height="3" fill="#000"/><rect x="9" y="3" width="1" height="3" fill="#000"/></svg><div class="a sunk" style="left:844px;top:381px;width:13px;height:13px;background:#fff"></div><div class="a sunk" style="left:856px;top:381px;width:13px;height:13px;background:#fff"></div><div class="a sunk" style="left:868px;top:381px;width:13px;height:13px;background:#fff"></div><svg style="left:868px;top:381px" width="13" height="13" viewBox="0 0 13 13" shape-rendering="crispEdges"><rect x="3" y="5" width="1" height="3" fill="#000"/><rect x="4" y="6" width="1" height="3" fill="#000"/><rect x="5" y="7" width="1" height="3" fill="#000"/><rect x="6" y="6" width="1" height="3" fill="#000"/><rect x="7" y="5" width="1" height="3" fill="#000"/><rect x="8" y="4" width="1" height="3" fill="#000"/><rect x="9" y="3" width="1" height="3" fill="#000"/></svg><div class="a sunk" style="left:880px;top:381px;width:13px;height:13px;background:#fff"></div><svg style="left:880px;top:381px" width="13" height="13" viewBox="0 0 13 13" shape-rendering="crispEdges"><rect x="3" y="5" width="1" height="3" fill="#000"/><rect x="4" y="6" width="1" height="3" fill="#000"/><rect x="5" y="7" width="1" height="3" fill="#000"/><rect x="6" y="6" width="1" height="3" fill="#000"/><rect x="7" y="5" width="1" height="3" fill="#000"/><rect x="8" y="4" width="1" height="3" fill="#000"/><rect x="9" y="3" width="1" height="3" fill="#000"/></svg><div class="a sunk" style="left:892px;top:381px;width:13px;height:13px;background:#fff"></div><div class="a sunk" style="left:910px;top:381px;width:13px;height:13px;background:#fff"></div><div class="a sunk" style="left:922px;top:381px;width:13px;height:13px;background:#fff"></div><svg style="left:922px;top:381px" width="13" height="13" viewBox="0 0 13 13" shape-rendering="crispEdges"><rect x="3" y="5" width="1" height="3" fill="#000"/><rect x="4" y="6" width="1" height="3" fill="#000"/><rect x="5" y="7" width="1" height="3" fill="#000"/><rect x="6" y="6" width="1" height="3" fill="#000"/><rect x="7" y="5" width="1" height="3" fill="#000"/><rect x="8" y="4" width="1" height="3" fill="#000"/><rect x="9" y="3" width="1" height="3" fill="#000"/></svg><div class="a sunk" style="left:934px;top:381px;width:13px;height:13px;background:#fff"></div><svg style="left:934px;top:381px" width="13" height="13" viewBox="0 0 13 13" shape-rendering="crispEdges"><rect x="3" y="5" width="1" height="3" fill="#000"/><rect x="4" y="6" width="1" height="3" fill="#000"/><rect x="5" y="7" width="1" height="3" fill="#000"/><rect x="6" y="6" width="1" height="3" fill="#000"/><rect x="7" y="5" width="1" height="3" fill="#000"/><rect x="8" y="4" width="1" height="3" fill="#000"/><rect x="9" y="3" width="1" height="3" fill="#000"/></svg><div class="a sunk" style="left:946px;top:381px;width:13px;height:13px;background:#fff"></div><div class="a sunk" style="left:958px;top:381px;width:13px;height:13px;background:#fff"></div><svg style="left:958px;top:381px" width="13" height="13" viewBox="0 0 13 13" shape-rendering="crispEdges"><rect x="3" y="5" width="1" height="3" fill="#000"/><rect x="4" y="6" width="1" height="3" fill="#000"/><rect x="5" y="7" width="1" height="3" fill="#000"/><rect x="6" y="6" width="1" height="3" fill="#000"/><rect x="7" y="5" width="1" height="3" fill="#000"/><rect x="8" y="4" width="1" height="3" fill="#000"/><rect x="9" y="3" width="1" height="3" fill="#000"/></svg><div class="a sunk" style="left:970px;top:381px;width:13px;height:13px;background:#fff"></div><svg style="left:970px;top:381px" width="13" height="13" viewBox="0 0 13 13" shape-rendering="crispEdges"><rect x="3" y="5" width="1" height="3" fill="#000"/><rect x="4" y="6" width="1" height="3" fill="#000"/><rect x="5" y="7" width="1" height="3" fill="#000"/><rect x="6" y="6" width="1" height="3" fill="#000"/><rect x="7" y="5" width="1" height="3" fill="#000"/><rect x="8" y="4" width="1" height="3" fill="#000"/><rect x="9" y="3" width="1" height="3" fill="#000"/></svg><div class="a sunk" style="left:982px;top:381px;width:13px;height:13px;background:#fff"></div><svg style="left:982px;top:381px" width="13" height="13" viewBox="0 0 13 13" shape-rendering="crispEdges"><rect x="3" y="5" width="1" height="3" fill="#000"/><rect x="4" y="6" width="1" height="3" fill="#000"/><rect x="5" y="7" width="1" height="3" fill="#000"/><rect x="6" y="6" width="1" height="3" fill="#000"/><rect x="7" y="5" width="1" height="3" fill="#000"/><rect x="8" y="4" width="1" height="3" fill="#000"/><rect x="9" y="3" width="1" height="3" fill="#000"/></svg><div class="a sunk" style="left:994px;top:381px;width:13px;height:13px;background:#fff"></div><svg style="left:994px;top:381px" width="13" height="13" viewBox="0 0 13 13" shape-rendering="crispEdges"><rect x="3" y="5" width="1" height="3" fill="#000"/><rect x="4" y="6" width="1" height="3" fill="#000"/><rect x="5" y="7" width="1" height="3" fill="#000"/><rect x="6" y="6" width="1" height="3" fill="#000"/><rect x="7" y="5" width="1" height="3" fill="#000"/><rect x="8" y="4" width="1" height="3" fill="#000"/><rect x="9" y="3" width="1" height="3" fill="#000"/></svg><div class="a sunk" style="left:1012px;top:381px;width:13px;height:13px;background:#fff"></div><svg style="left:1012px;top:381px" width="13" height="13" viewBox="0 0 13 13" shape-rendering="crispEdges"><rect x="3" y="5" width="1" height="3" fill="#000"/><rect x="4" y="6" width="1" height="3" fill="#000"/><rect x="5" y="7" width="1" height="3" fill="#000"/><rect x="6" y="6" width="1" height="3" fill="#000"/><rect x="7" y="5" width="1" height="3" fill="#000"/><rect x="8" y="4" width="1" height="3" fill="#000"/><rect x="9" y="3" width="1" height="3" fill="#000"/></svg><div class="a sunk" style="left:1024px;top:381px;width:13px;height:13px;background:#fff"></div><div class="a sunk" style="left:1036px;top:381px;width:13px;height:13px;background:#fff"></div><svg style="left:1036px;top:381px" width="13" height="13" viewBox="0 0 13 13" shape-rendering="crispEdges"><rect x="3" y="5" width="1" height="3" fill="#000"/><rect x="4" y="6" width="1" height="3" fill="#000"/><rect x="5" y="7" width="1" height="3" fill="#000"/><rect x="6" y="6" width="1" height="3" fill="#000"/><rect x="7" y="5" width="1" height="3" fill="#000"/><rect x="8" y="4" width="1" height="3" fill="#000"/><rect x="9" y="3" width="1" height="3" fill="#000"/></svg><div class="a sunk" style="left:1048px;top:381px;width:13px;height:13px;background:#fff"></div><div class="a sunk" style="left:1060px;top:381px;width:13px;height:13px;background:#fff"></div><svg style="left:1060px;top:381px" width="13" height="13" viewBox="0 0 13 13" shape-rendering="crispEdges"><rect x="3" y="5" width="1" height="3" fill="#000"/><rect x="4" y="6" width="1" height="3" fill="#000"/><rect x="5" y="7" width="1" height="3" fill="#000"/><rect x="6" y="6" width="1" height="3" fill="#000"/><rect x="7" y="5" width="1" height="3" fill="#000"/><rect x="8" y="4" width="1" height="3" fill="#000"/><rect x="9" y="3" width="1" height="3" fill="#000"/></svg><div class="a sunk" style="left:1072px;top:381px;width:13px;height:13px;background:#fff"></div><div class="a sunk" style="left:1084px;top:381px;width:13px;height:13px;background:#fff"></div><div class="a sunk" style="left:1096px;top:381px;width:13px;height:13px;background:#fff"></div><div class="a t" style="left:559px;width:54px;text-align:right;top:401px">IO0CLR:</div><div class="a sunk" style="left:616px;top:397px;width:80px;height:20px;background:#fff"></div><div class="a t " style="left:619px;top:401px;">0x02666FA8</div><div class="a sunk" style="left:706px;top:404px;width:13px;height:13px;background:#fff"></div><div class="a sunk" style="left:718px;top:404px;width:13px;height:13px;background:#fff"></div><div class="a sunk" style="left:730px;top:404px;width:13px;height:13px;background:#fff"></div><div class="a sunk" style="left:742px;top:404px;width:13px;height:13px;background:#fff"></div><div class="a sunk" style="left:754px;top:404px;width:13px;height:13px;background:#fff"></div><div class="a sunk" style="left:766px;top:404px;width:13px;height:13px;background:#fff"></div><div class="a sunk" style="left:778px;top:404px;width:13px;height:13px;background:#fff"></div><svg style="left:778px;top:404px" width="13" height="13" viewBox="0 0 13 13" shape-rendering="crispEdges"><rect x="3" y="5" width="1" height="3" fill="#000"/><rect x="4" y="6" width="1" height="3" fill="#000"/><rect x="5" y="7" width="1" height="3" fill="#000"/><rect x="6" y="6" width="1" height="3" fill="#000"/><rect x="7" y="5" width="1" height="3" fill="#000"/><rect x="8" y="4" width="1" height="3" fill="#000"/><rect x="9" y="3" width="1" height="3" fill="#000"/></svg><div class="a sunk" style="left:790px;top:404px;width:13px;height:13px;background:#fff"></div><div class="a sunk" style="left:808px;top:404px;width:13px;height:13px;background:#fff"></div><div class="a sunk" style="left:820px;top:404px;width:13px;height:13px;background:#fff"></div><svg style="left:820px;top:404px" width="13" height="13" viewBox="0 0 13 13" shape-rendering="crispEdges"><rect x="3" y="5" width="1" height="3" fill="#000"/><rect x="4" y="6" width="1" height="3" fill="#000"/><rect x="5" y="7" width="1" height="3" fill="#000"/><rect x="6" y="6" width="1" height="3" fill="#000"/><rect x="7" y="5" width="1" height="3" fill="#000"/><rect x="8" y="4" width="1" height="3" fill="#000"/><rect x="9" y="3" width="1" height="3" fill="#000"/></svg><div class="a sunk" style="left:832px;top:404px;width:13px;height:13px;background:#fff"></div><svg style="left:832px;top:404px" width="13" height="13" viewBox="0 0 13 13" shape-rendering="crispEdges"><rect x="3" y="5" width="1" height="3" fill="#000"/><rect x="4" y="6" width="1" height="3" fill="#000"/><rect x="5" y="7" width="1" height="3" fill="#000"/><rect x="6" y="6" width="1" height="3" fill="#000"/><rect x="7" y="5" width="1" height="3" fill="#000"/><rect x="8" y="4" width="1" height="3" fill="#000"/><rect x="9" y="3" width="1" height="3" fill="#000"/></svg><div class="a sunk" style="left:844px;top:404px;width:13px;height:13px;background:#fff"></div><div class="a sunk" style="left:856px;top:404px;width:13px;height:13px;background:#fff"></div><div class="a sunk" style="left:868px;top:404px;width:13px;height:13px;background:#fff"></div><svg style="left:868px;top:404px" width="13" height="13" viewBox="0 0 13 13" shape-rendering="crispEdges"><rect x="3" y="5" width="1" height="3" fill="#000"/><rect x="4" y="6" width="1" height="3" fill="#000"/><rect x="5" y="7" width="1" height="3" fill="#000"/><rect x="6" y="6" width="1" height="3" fill="#000"/><rect x="7" y="5" width="1" height="3" fill="#000"/><rect x="8" y="4" width="1" height="3" fill="#000"/><rect x="9" y="3" width="1" height="3" fill="#000"/></svg><div class="a sunk" style="left:880px;top:404px;width:13px;height:13px;background:#fff"></div><svg style="left:880px;top:404px" width="13" height="13" viewBox="0 0 13 13" shape-rendering="crispEdges"><rect x="3" y="5" width="1" height="3" fill="#000"/><rect x="4" y="6" width="1" height="3" fill="#000"/><rect x="5" y="7" width="1" height="3" fill="#000"/><rect x="6" y="6" width="1" height="3" fill="#000"/><rect x="7" y="5" width="1" height="3" fill="#000"/><rect x="8" y="4" width="1" height="3" fill="#000"/><rect x="9" y="3" width="1" height="3" fill="#000"/></svg><div class="a sunk" style="left:892px;top:404px;width:13px;height:13px;background:#fff"></div><div class="a sunk" style="left:910px;top:404px;width:13px;height:13px;background:#fff"></div><div class="a sunk" style="left:922px;top:404px;width:13px;height:13px;background:#fff"></div><svg style="left:922px;top:404px" width="13" height="13" viewBox="0 0 13 13" shape-rendering="crispEdges"><rect x="3" y="5" width="1" height="3" fill="#000"/><rect x="4" y="6" width="1" height="3" fill="#000"/><rect x="5" y="7" width="1" height="3" fill="#000"/><rect x="6" y="6" width="1" height="3" fill="#000"/><rect x="7" y="5" width="1" height="3" fill="#000"/><rect x="8" y="4" width="1" height="3" fill="#000"/><rect x="9" y="3" width="1" height="3" fill="#000"/></svg><div class="a sunk" style="left:934px;top:404px;width:13px;height:13px;background:#fff"></div><svg style="left:934px;top:404px" width="13" height="13" viewBox="0 0 13 13" shape-rendering="crispEdges"><rect x="3" y="5" width="1" height="3" fill="#000"/><rect x="4" y="6" width="1" height="3" fill="#000"/><rect x="5" y="7" width="1" height="3" fill="#000"/><rect x="6" y="6" width="1" height="3" fill="#000"/><rect x="7" y="5" width="1" height="3" fill="#000"/><rect x="8" y="4" width="1" height="3" fill="#000"/><rect x="9" y="3" width="1" height="3" fill="#000"/></svg><div class="a sunk" style="left:946px;top:404px;width:13px;height:13px;background:#fff"></div><div class="a sunk" style="left:958px;top:404px;width:13px;height:13px;background:#fff"></div><svg style="left:958px;top:404px" width="13" height="13" viewBox="0 0 13 13" shape-rendering="crispEdges"><rect x="3" y="5" width="1" height="3" fill="#000"/><rect x="4" y="6" width="1" height="3" fill="#000"/><rect x="5" y="7" width="1" height="3" fill="#000"/><rect x="6" y="6" width="1" height="3" fill="#000"/><rect x="7" y="5" width="1" height="3" fill="#000"/><rect x="8" y="4" width="1" height="3" fill="#000"/><rect x="9" y="3" width="1" height="3" fill="#000"/></svg><div class="a sunk" style="left:970px;top:404px;width:13px;height:13px;background:#fff"></div><svg style="left:970px;top:404px" width="13" height="13" viewBox="0 0 13 13" shape-rendering="crispEdges"><rect x="3" y="5" width="1" height="3" fill="#000"/><rect x="4" y="6" width="1" height="3" fill="#000"/><rect x="5" y="7" width="1" height="3" fill="#000"/><rect x="6" y="6" width="1" height="3" fill="#000"/><rect x="7" y="5" width="1" height="3" fill="#000"/><rect x="8" y="4" width="1" height="3" fill="#000"/><rect x="9" y="3" width="1" height="3" fill="#000"/></svg><div class="a sunk" style="left:982px;top:404px;width:13px;height:13px;background:#fff"></div><svg style="left:982px;top:404px" width="13" height="13" viewBox="0 0 13 13" shape-rendering="crispEdges"><rect x="3" y="5" width="1" height="3" fill="#000"/><rect x="4" y="6" width="1" height="3" fill="#000"/><rect x="5" y="7" width="1" height="3" fill="#000"/><rect x="6" y="6" width="1" height="3" fill="#000"/><rect x="7" y="5" width="1" height="3" fill="#000"/><rect x="8" y="4" width="1" height="3" fill="#000"/><rect x="9" y="3" width="1" height="3" fill="#000"/></svg><div class="a sunk" style="left:994px;top:404px;width:13px;height:13px;background:#fff"></div><svg style="left:994px;top:404px" width="13" height="13" viewBox="0 0 13 13" shape-rendering="crispEdges"><rect x="3" y="5" width="1" height="3" fill="#000"/><rect x="4" y="6" width="1" height="3" fill="#000"/><rect x="5" y="7" width="1" height="3" fill="#000"/><rect x="6" y="6" width="1" height="3" fill="#000"/><rect x="7" y="5" width="1" height="3" fill="#000"/><rect x="8" y="4" width="1" height="3" fill="#000"/><rect x="9" y="3" width="1" height="3" fill="#000"/></svg><div class="a sunk" style="left:1012px;top:404px;width:13px;height:13px;background:#fff"></div><svg style="left:1012px;top:404px" width="13" height="13" viewBox="0 0 13 13" shape-rendering="crispEdges"><rect x="3" y="5" width="1" height="3" fill="#000"/><rect x="4" y="6" width="1" height="3" fill="#000"/><rect x="5" y="7" width="1" height="3" fill="#000"/><rect x="6" y="6" width="1" height="3" fill="#000"/><rect x="7" y="5" width="1" height="3" fill="#000"/><rect x="8" y="4" width="1" height="3" fill="#000"/><rect x="9" y="3" width="1" height="3" fill="#000"/></svg><div class="a sunk" style="left:1024px;top:404px;width:13px;height:13px;background:#fff"></div><div class="a sunk" style="left:1036px;top:404px;width:13px;height:13px;background:#fff"></div><svg style="left:1036px;top:404px" width="13" height="13" viewBox="0 0 13 13" shape-rendering="crispEdges"><rect x="3" y="5" width="1" height="3" fill="#000"/><rect x="4" y="6" width="1" height="3" fill="#000"/><rect x="5" y="7" width="1" height="3" fill="#000"/><rect x="6" y="6" width="1" height="3" fill="#000"/><rect x="7" y="5" width="1" height="3" fill="#000"/><rect x="8" y="4" width="1" height="3" fill="#000"/><rect x="9" y="3" width="1" height="3" fill="#000"/></svg><div class="a sunk" style="left:1048px;top:404px;width:13px;height:13px;background:#fff"></div><div class="a sunk" style="left:1060px;top:404px;width:13px;height:13px;background:#fff"></div><svg style="left:1060px;top:404px" width="13" height="13" viewBox="0 0 13 13" shape-rendering="crispEdges"><rect x="3" y="5" width="1" height="3" fill="#000"/><rect x="4" y="6" width="1" height="3" fill="#000"/><rect x="5" y="7" width="1" height="3" fill="#000"/><rect x="6" y="6" width="1" height="3" fill="#000"/><rect x="7" y="5" width="1" height="3" fill="#000"/><rect x="8" y="4" width="1" height="3" fill="#000"/><rect x="9" y="3" width="1" height="3" fill="#000"/></svg><div class="a sunk" style="left:1072px;top:404px;width:13px;height:13px;background:#fff"></div><div class="a sunk" style="left:1084px;top:404px;width:13px;height:13px;background:#fff"></div><div class="a sunk" style="left:1096px;top:404px;width:13px;height:13px;background:#fff"></div><div class="a t" style="left:559px;width:54px;text-align:right;top:424px">IO0PIN:</div><div class="a sunk" style="left:616px;top:420px;width:80px;height:20px;background:#fff"></div><div class="a t " style="left:619px;top:424px;">0x02666FA8</div><div class="a sunk" style="left:706px;top:427px;width:13px;height:13px;background:#d4d0c8"></div><div class="a sunk" style="left:718px;top:427px;width:13px;height:13px;background:#d4d0c8"></div><div class="a sunk" style="left:730px;top:427px;width:13px;height:13px;background:#d4d0c8"></div><div class="a sunk" style="left:742px;top:427px;width:13px;height:13px;background:#d4d0c8"></div><div class="a sunk" style="left:754px;top:427px;width:13px;height:13px;background:#d4d0c8"></div><div class="a sunk" style="left:766px;top:427px;width:13px;height:13px;background:#d4d0c8"></div><div class="a sunk" style="left:778px;top:427px;width:13px;height:13px;background:#d4d0c8"></div><svg style="left:778px;top:427px" width="13" height="13" viewBox="0 0 13 13" shape-rendering="crispEdges"><rect x="3" y="5" width="1" height="3" fill="#808080"/><rect x="4" y="6" width="1" height="3" fill="#808080"/><rect x="5" y="7" width="1" height="3" fill="#808080"/><rect x="6" y="6" width="1" height="3" fill="#808080"/><rect x="7" y="5" width="1" height="3" fill="#808080"/><rect x="8" y="4" width="1" height="3" fill="#808080"/><rect x="9" y="3" width="1" height="3" fill="#808080"/></svg><div class="a sunk" style="left:790px;top:427px;width:13px;height:13px;background:#d4d0c8"></div><div class="a sunk" style="left:808px;top:427px;width:13px;height:13px;background:#d4d0c8"></div><div class="a sunk" style="left:820px;top:427px;width:13px;height:13px;background:#d4d0c8"></div><svg style="left:820px;top:427px" width="13" height="13" viewBox="0 0 13 13" shape-rendering="crispEdges"><rect x="3" y="5" width="1" height="3" fill="#808080"/><rect x="4" y="6" width="1" height="3" fill="#808080"/><rect x="5" y="7" width="1" height="3" fill="#808080"/><rect x="6" y="6" width="1" height="3" fill="#808080"/><rect x="7" y="5" width="1" height="3" fill="#808080"/><rect x="8" y="4" width="1" height="3" fill="#808080"/><rect x="9" y="3" width="1" height="3" fill="#808080"/></svg><div class="a sunk" style="left:832px;top:427px;width:13px;height:13px;background:#d4d0c8"></div><svg style="left:832px;top:427px" width="13" height="13" viewBox="0 0 13 13" shape-rendering="crispEdges"><rect x="3" y="5" width="1" height="3" fill="#808080"/><rect x="4" y="6" width="1" height="3" fill="#808080"/><rect x="5" y="7" width="1" height="3" fill="#808080"/><rect x="6" y="6" width="1" height="3" fill="#808080"/><rect x="7" y="5" width="1" height="3" fill="#808080"/><rect x="8" y="4" width="1" height="3" fill="#808080"/><rect x="9" y="3" width="1" height="3" fill="#808080"/></svg><div class="a sunk" style="left:844px;top:427px;width:13px;height:13px;background:#d4d0c8"></div><div class="a sunk" style="left:856px;top:427px;width:13px;height:13px;background:#d4d0c8"></div><div class="a sunk" style="left:868px;top:427px;width:13px;height:13px;background:#d4d0c8"></div><svg style="left:868px;top:427px" width="13" height="13" viewBox="0 0 13 13" shape-rendering="crispEdges"><rect x="3" y="5" width="1" height="3" fill="#808080"/><rect x="4" y="6" width="1" height="3" fill="#808080"/><rect x="5" y="7" width="1" height="3" fill="#808080"/><rect x="6" y="6" width="1" height="3" fill="#808080"/><rect x="7" y="5" width="1" height="3" fill="#808080"/><rect x="8" y="4" width="1" height="3" fill="#808080"/><rect x="9" y="3" width="1" height="3" fill="#808080"/></svg><div class="a sunk" style="left:880px;top:427px;width:13px;height:13px;background:#d4d0c8"></div><svg style="left:880px;top:427px" width="13" height="13" viewBox="0 0 13 13" shape-rendering="crispEdges"><rect x="3" y="5" width="1" height="3" fill="#808080"/><rect x="4" y="6" width="1" height="3" fill="#808080"/><rect x="5" y="7" width="1" height="3" fill="#808080"/><rect x="6" y="6" width="1" height="3" fill="#808080"/><rect x="7" y="5" width="1" height="3" fill="#808080"/><rect x="8" y="4" width="1" height="3" fill="#808080"/><rect x="9" y="3" width="1" height="3" fill="#808080"/></svg><div class="a sunk" style="left:892px;top:427px;width:13px;height:13px;background:#d4d0c8"></div><div class="a sunk" style="left:910px;top:427px;width:13px;height:13px;background:#d4d0c8"></div><div class="a sunk" style="left:922px;top:427px;width:13px;height:13px;background:#d4d0c8"></div><svg style="left:922px;top:427px" width="13" height="13" viewBox="0 0 13 13" shape-rendering="crispEdges"><rect x="3" y="5" width="1" height="3" fill="#808080"/><rect x="4" y="6" width="1" height="3" fill="#808080"/><rect x="5" y="7" width="1" height="3" fill="#808080"/><rect x="6" y="6" width="1" height="3" fill="#808080"/><rect x="7" y="5" width="1" height="3" fill="#808080"/><rect x="8" y="4" width="1" height="3" fill="#808080"/><rect x="9" y="3" width="1" height="3" fill="#808080"/></svg><div class="a sunk" style="left:934px;top:427px;width:13px;height:13px;background:#d4d0c8"></div><svg style="left:934px;top:427px" width="13" height="13" viewBox="0 0 13 13" shape-rendering="crispEdges"><rect x="3" y="5" width="1" height="3" fill="#808080"/><rect x="4" y="6" width="1" height="3" fill="#808080"/><rect x="5" y="7" width="1" height="3" fill="#808080"/><rect x="6" y="6" width="1" height="3" fill="#808080"/><rect x="7" y="5" width="1" height="3" fill="#808080"/><rect x="8" y="4" width="1" height="3" fill="#808080"/><rect x="9" y="3" width="1" height="3" fill="#808080"/></svg><div class="a sunk" style="left:946px;top:427px;width:13px;height:13px;background:#d4d0c8"></div><div class="a sunk" style="left:958px;top:427px;width:13px;height:13px;background:#d4d0c8"></div><svg style="left:958px;top:427px" width="13" height="13" viewBox="0 0 13 13" shape-rendering="crispEdges"><rect x="3" y="5" width="1" height="3" fill="#808080"/><rect x="4" y="6" width="1" height="3" fill="#808080"/><rect x="5" y="7" width="1" height="3" fill="#808080"/><rect x="6" y="6" width="1" height="3" fill="#808080"/><rect x="7" y="5" width="1" height="3" fill="#808080"/><rect x="8" y="4" width="1" height="3" fill="#808080"/><rect x="9" y="3" width="1" height="3" fill="#808080"/></svg><div class="a sunk" style="left:970px;top:427px;width:13px;height:13px;background:#d4d0c8"></div><svg style="left:970px;top:427px" width="13" height="13" viewBox="0 0 13 13" shape-rendering="crispEdges"><rect x="3" y="5" width="1" height="3" fill="#808080"/><rect x="4" y="6" width="1" height="3" fill="#808080"/><rect x="5" y="7" width="1" height="3" fill="#808080"/><rect x="6" y="6" width="1" height="3" fill="#808080"/><rect x="7" y="5" width="1" height="3" fill="#808080"/><rect x="8" y="4" width="1" height="3" fill="#808080"/><rect x="9" y="3" width="1" height="3" fill="#808080"/></svg><div class="a sunk" style="left:982px;top:427px;width:13px;height:13px;background:#d4d0c8"></div><svg style="left:982px;top:427px" width="13" height="13" viewBox="0 0 13 13" shape-rendering="crispEdges"><rect x="3" y="5" width="1" height="3" fill="#808080"/><rect x="4" y="6" width="1" height="3" fill="#808080"/><rect x="5" y="7" width="1" height="3" fill="#808080"/><rect x="6" y="6" width="1" height="3" fill="#808080"/><rect x="7" y="5" width="1" height="3" fill="#808080"/><rect x="8" y="4" width="1" height="3" fill="#808080"/><rect x="9" y="3" width="1" height="3" fill="#808080"/></svg><div class="a sunk" style="left:994px;top:427px;width:13px;height:13px;background:#d4d0c8"></div><svg style="left:994px;top:427px" width="13" height="13" viewBox="0 0 13 13" shape-rendering="crispEdges"><rect x="3" y="5" width="1" height="3" fill="#808080"/><rect x="4" y="6" width="1" height="3" fill="#808080"/><rect x="5" y="7" width="1" height="3" fill="#808080"/><rect x="6" y="6" width="1" height="3" fill="#808080"/><rect x="7" y="5" width="1" height="3" fill="#808080"/><rect x="8" y="4" width="1" height="3" fill="#808080"/><rect x="9" y="3" width="1" height="3" fill="#808080"/></svg><div class="a sunk" style="left:1012px;top:427px;width:13px;height:13px;background:#d4d0c8"></div><svg style="left:1012px;top:427px" width="13" height="13" viewBox="0 0 13 13" shape-rendering="crispEdges"><rect x="3" y="5" width="1" height="3" fill="#808080"/><rect x="4" y="6" width="1" height="3" fill="#808080"/><rect x="5" y="7" width="1" height="3" fill="#808080"/><rect x="6" y="6" width="1" height="3" fill="#808080"/><rect x="7" y="5" width="1" height="3" fill="#808080"/><rect x="8" y="4" width="1" height="3" fill="#808080"/><rect x="9" y="3" width="1" height="3" fill="#808080"/></svg><div class="a sunk" style="left:1024px;top:427px;width:13px;height:13px;background:#d4d0c8"></div><div class="a sunk" style="left:1036px;top:427px;width:13px;height:13px;background:#d4d0c8"></div><svg style="left:1036px;top:427px" width="13" height="13" viewBox="0 0 13 13" shape-rendering="crispEdges"><rect x="3" y="5" width="1" height="3" fill="#808080"/><rect x="4" y="6" width="1" height="3" fill="#808080"/><rect x="5" y="7" width="1" height="3" fill="#808080"/><rect x="6" y="6" width="1" height="3" fill="#808080"/><rect x="7" y="5" width="1" height="3" fill="#808080"/><rect x="8" y="4" width="1" height="3" fill="#808080"/><rect x="9" y="3" width="1" height="3" fill="#808080"/></svg><div class="a sunk" style="left:1048px;top:427px;width:13px;height:13px;background:#d4d0c8"></div><div class="a sunk" style="left:1060px;top:427px;width:13px;height:13px;background:#d4d0c8"></div><svg style="left:1060px;top:427px" width="13" height="13" viewBox="0 0 13 13" shape-rendering="crispEdges"><rect x="3" y="5" width="1" height="3" fill="#808080"/><rect x="4" y="6" width="1" height="3" fill="#808080"/><rect x="5" y="7" width="1" height="3" fill="#808080"/><rect x="6" y="6" width="1" height="3" fill="#808080"/><rect x="7" y="5" width="1" height="3" fill="#808080"/><rect x="8" y="4" width="1" height="3" fill="#808080"/><rect x="9" y="3" width="1" height="3" fill="#808080"/></svg><div class="a sunk" style="left:1072px;top:427px;width:13px;height:13px;background:#d4d0c8"></div><div class="a sunk" style="left:1084px;top:427px;width:13px;height:13px;background:#d4d0c8"></div><div class="a sunk" style="left:1096px;top:427px;width:13px;height:13px;background:#d4d0c8"></div><div class="a t " style="left:707px;top:346px;">31</div><div class="a t " style="left:749px;top:346px;">Bits</div><div class="a t" style="left:766px;width:38px;text-align:right;top:346px">24</div><div class="a t " style="left:809px;top:346px;">23</div><div class="a t " style="left:851px;top:346px;">Bits</div><div class="a t" style="left:868px;width:38px;text-align:right;top:346px">16</div><div class="a t " style="left:911px;top:346px;">15</div><div class="a t " style="left:953px;top:346px;">Bits</div><div class="a t" style="left:970px;width:38px;text-align:right;top:346px">8</div><div class="a t " style="left:1013px;top:346px;">7</div><div class="a t " style="left:1055px;top:346px;">Bits</div><div class="a t" style="left:1072px;width:38px;text-align:right;top:346px">0</div><div class="a " style="left:10px;top:692px;width:14px;height:217px;border:1px solid #808080;border-radius:2px;box-shadow:inset 1px 1px #fff,1px 1px #fff"></div><svg style="left:14px;top:698px" width="7" height="6" viewBox="0 0 7 6" shape-rendering="crispEdges"><path d="M0.5 0.5L6 5.5M6 0.5L0.5 5.5" stroke="#000" stroke-width="1.6" shape-rendering="auto"/></svg><svg style="left:15px;top:711px" width="4" height="6" viewBox="0 0 4 6" shape-rendering="crispEdges"><path d="M3.5 0V6L0 3Z" fill="#000"/></svg><div class="a t" style="left:10px;top:905px;transform-origin:0 0;transform:rotate(-90deg) scaleX(0.92)">Output Window</div><div class="a sunk" style="left:25px;top:694px;width:598px;height:213px;"></div><div class="a " style="left:27px;top:696px;width:578px;height:148px;background:#fff"></div><div class="a m" style="left:30px;top:697px;">Running with Code Size Limit: 32K</div><div class="a m" style="left:30px;top:713px;">Load &quot;C:\\Keil\\test1\\Blinky\\Obj\\Blinky.AXF&quot;</div><div class="a m" style="left:30px;top:745px;">*** Restricted Version with 32768 Byte Code Size Limit</div><div class="a m" style="left:30px;top:761px;">*** Currently used: 496 Bytes (1%)</div><div class="a m" style="left:30px;top:793px;">RDI-Error 5: RDIError_DataAbort (Addr:=0x00000000)</div><div class="a m" style="left:30px;top:809px;">*** RDI: System-Reset is not supported !</div><div class="a m" style="left:30px;top:825px;">BS \Blinky\25</div><div class="a " style="left:27px;top:844px;width:578px;height:3px;background:#d4d0c8;box-shadow:inset 0 1px #fff"></div><div class="a " style="left:27px;top:847px;width:578px;height:1px;background:#404040"></div><div class="a " style="left:27px;top:848px;width:578px;height:19px;background:#fff"></div><div class="a " style="left:27px;top:848px;width:16px;height:19px;background:#d4d0c8"></div><div class="a m" style="left:35px;top:850px;">&gt;</div><div class="a " style="left:27px;top:867px;width:578px;height:22px;background:#d4d0c8;box-shadow:inset 1px 1px #fff,inset -1px 0 #000"></div><div class="a m" style="left:31px;top:870px;">ASSIGN BreakDisable BreakEnable BreakKill BreakList BreakSet</div><div class="a dith" style="left:605px;top:696px;width:16px;height:193px;"></div><div class="a raised" style="left:605px;top:695px;width:16px;height:16px;"></div><svg style="left:605px;top:695px" width="16" height="16" viewBox="0 0 16 16" shape-rendering="crispEdges"><rect x="4" y="9" width="7" height="1" fill="#000"/><rect x="5" y="8" width="5" height="1" fill="#000"/><rect x="6" y="7" width="3" height="1" fill="#000"/><rect x="7" y="6" width="1" height="1" fill="#000"/></svg><div class="a raised" style="left:605px;top:857px;width:16px;height:16px;"></div><div class="a raised" style="left:605px;top:873px;width:16px;height:16px;"></div><svg style="left:605px;top:873px" width="16" height="16" viewBox="0 0 16 16" shape-rendering="crispEdges"><rect x="4" y="6" width="7" height="1" fill="#000"/><rect x="5" y="7" width="5" height="1" fill="#000"/><rect x="6" y="8" width="3" height="1" fill="#000"/><rect x="7" y="9" width="1" height="1" fill="#000"/></svg><div class="a " style="left:27px;top:889px;width:578px;height:16px;background:#d4d0c8"></div><div class="a " style="left:27px;top:889px;width:362px;height:1px;background:#000"></div><div class="a " style="left:27px;top:890px;width:16px;height:15px;background:#d4d0c8;box-shadow:inset 1px 1px #fff,inset -1px -1px #808080,1px 0 #000"></div><div class="a " style="left:43px;top:890px;width:16px;height:15px;background:#d4d0c8;box-shadow:inset 1px 1px #fff,inset -1px -1px #808080,1px 0 #000"></div><div class="a " style="left:60px;top:890px;width:16px;height:15px;background:#d4d0c8;box-shadow:inset 1px 1px #fff,inset -1px -1px #808080,1px 0 #000"></div><div class="a " style="left:76px;top:890px;width:16px;height:15px;background:#d4d0c8;box-shadow:inset 1px 1px #fff,inset -1px -1px #808080,1px 0 #000"></div><svg style="left:27px;top:890px" width="66" height="15" viewBox="0 0 66 15" shape-rendering="crispEdges"><path d="M5 4V11" stroke="#808080"/><path d="M11 3.5V11.5L6.5 7.5Z" fill="#808080"/><path d="M27 3.5V11.5L22.5 7.5Z" fill="#808080"/><path d="M39 3.5V11.5L43.5 7.5Z" fill="#808080"/><path d="M55 3.5V11.5L59.5 7.5Z" fill="#808080"/><path d="M61 4V11" stroke="#808080"/></svg><svg style="left:94px;top:889px" width="180" height="16" viewBox="0 0 180 16" shape-rendering="crispEdges"><path d="M0.5 0.5L5 15.5H39L43.5 0.5" fill="#d4d0c8" stroke="#000"/><path d="M109 0.5L113 15.5H176L180 0.5" fill="#d4d0c8" stroke="#000"/><path d="M38.5 0.5L43 15.5H104.5L109 0.5" fill="#fff" stroke="#000"/><path d="M0 0.5H180" stroke="#fff"/></svg><div class="a t " style="left:106px;top:891px;">Build</div><div class="a t " style="left:144px;top:891px;"><b style="letter-spacing:-0.75px">Command</b></div><div class="a t " style="left:211px;top:891px;">Find in Files</div><div class="a " style="left:388px;top:889px;width:2px;height:16px;background:#000"></div><div class="a dith" style="left:390px;top:889px;width:215px;height:16px;"></div><div class="a raised" style="left:390px;top:889px;width:16px;height:16px;"></div><svg style="left:390px;top:889px" width="16" height="16" viewBox="0 0 16 16" shape-rendering="crispEdges"><rect x="9" y="4" width="1" height="7" fill="#000"/><rect x="8" y="5" width="1" height="5" fill="#000"/><rect x="7" y="6" width="1" height="3" fill="#000"/><rect x="6" y="7" width="1" height="1" fill="#000"/></svg><div class="a raised" style="left:406px;top:889px;width:183px;height:16px;"></div><div class="a raised" style="left:589px;top:889px;width:16px;height:16px;"></div><svg style="left:589px;top:889px" width="16" height="16" viewBox="0 0 16 16" shape-rendering="crispEdges"><rect x="6" y="4" width="1" height="7" fill="#000"/><rect x="7" y="5" width="1" height="5" fill="#000"/><rect x="8" y="6" width="1" height="3" fill="#000"/><rect x="9" y="7" width="1" height="1" fill="#000"/></svg><div class="a " style="left:605px;top:889px;width:16px;height:16px;background:#d4d0c8"></div><div class="a " style="left:626px;top:690px;width:1px;height:220px;background:#fff"></div><div class="a " style="left:631px;top:690px;width:1px;height:220px;background:#000"></div><div class="a " style="left:941px;top:690px;width:1px;height:220px;background:#fff"></div><div class="a " style="left:946px;top:690px;width:1px;height:220px;background:#000"></div><div class="a " style="left:634px;top:692px;width:14px;height:217px;border:1px solid #808080;border-radius:2px;box-shadow:inset 1px 1px #fff,1px 1px #fff"></div><svg style="left:638px;top:698px" width="7" height="6" viewBox="0 0 7 6" shape-rendering="crispEdges"><path d="M0.5 0.5L6 5.5M6 0.5L0.5 5.5" stroke="#000" stroke-width="1.6" shape-rendering="auto"/></svg><svg style="left:639px;top:711px" width="4" height="6" viewBox="0 0 4 6" shape-rendering="crispEdges"><path d="M3.5 0V6L0 3Z" fill="#000"/></svg><div class="a t" style="left:634px;top:905px;transform-origin:0 0;transform:rotate(-90deg) scaleX(0.86)">Call Stack</div><div class="a " style="left:649px;top:694px;width:289px;height:213px;background:#fff;box-shadow:inset 1px 1px #808080,inset -1px -1px #fff,inset 2px 2px #404040,inset -2px -2px #d4d0c8"></div><div class="a raised" style="left:651px;top:695px;width:150px;height:20px;"></div><div class="a t " style="left:656px;top:700px;">Stack Frames</div><div class="a raised" style="left:800px;top:695px;width:136px;height:20px;"></div><div class="a t " style="left:686px;top:700px;"></div><div class="a t " style="left:807px;top:700px;">Value/Address</div><div class="a " style="left:949px;top:692px;width:14px;height:217px;border:1px solid #808080;border-radius:2px;box-shadow:inset 1px 1px #fff,1px 1px #fff"></div><svg style="left:953px;top:698px" width="7" height="6" viewBox="0 0 7 6" shape-rendering="crispEdges"><path d="M0.5 0.5L6 5.5M6 0.5L0.5 5.5" stroke="#000" stroke-width="1.6" shape-rendering="auto"/></svg><svg style="left:954px;top:711px" width="4" height="6" viewBox="0 0 4 6" shape-rendering="crispEdges"><path d="M3.5 0V6L0 3Z" fill="#000"/></svg><div class="a t" style="left:949px;top:905px;transform-origin:0 0;transform:rotate(-90deg) scaleX(0.88)">Trace</div><div class="a t " style="left:986px;top:701px;">Filter:</div><div class="a sunk" style="left:1018px;top:696px;width:118px;height:20px;background:#fff"></div><div class="a t " style="left:1022px;top:700px;">Execution-All</div><div class="a raised" style="left:1119px;top:698px;width:15px;height:16px;"></div><svg style="left:1119px;top:698px" width="15" height="16" viewBox="0 0 15 16" shape-rendering="crispEdges"><rect x="4" y="6" width="7" height="1" fill="#000"/><rect x="5" y="7" width="5" height="1" fill="#000"/><rect x="6" y="8" width="3" height="1" fill="#000"/><rect x="7" y="9" width="1" height="1" fill="#000"/></svg><div class="a " style="left:964px;top:722px;width:274px;height:187px;background:#fff;box-shadow:inset 1px 1px #808080,inset 2px 2px #404040"></div><div class="a raised" style="left:966px;top:723px;width:60px;height:20px;"></div><div class="a t " style="left:990px;top:727px;">Nr.</div><div class="a raised" style="left:1025px;top:723px;width:76px;height:20px;"></div><div class="a t " style="left:1031px;top:727px;">Address</div><div class="a raised" style="left:1100px;top:723px;width:76px;height:20px;"></div><div class="a t " style="left:1106px;top:727px;">Opcode</div><div class="a raised" style="left:1175px;top:723px;width:61px;height:20px;"></div><div class="a t " style="left:1182px;top:727px;">Instruction</div><div class="a dith" style="left:1239px;top:722px;width:16px;height:187px;"></div><div class="a raised" style="left:1239px;top:722px;width:16px;height:16px;"></div><svg style="left:1239px;top:722px" width="16" height="16" viewBox="0 0 16 16" shape-rendering="crispEdges"><rect x="4" y="9" width="7" height="1" fill="#a0a0a0"/><rect x="5" y="8" width="5" height="1" fill="#a0a0a0"/><rect x="6" y="7" width="3" height="1" fill="#a0a0a0"/><rect x="7" y="6" width="1" height="1" fill="#a0a0a0"/></svg><div class="a raised" style="left:1239px;top:893px;width:16px;height:16px;"></div><svg style="left:1239px;top:893px" width="16" height="16" viewBox="0 0 16 16" shape-rendering="crispEdges"><rect x="4" y="6" width="7" height="1" fill="#a0a0a0"/><rect x="5" y="7" width="5" height="1" fill="#a0a0a0"/><rect x="6" y="8" width="3" height="1" fill="#a0a0a0"/><rect x="7" y="9" width="1" height="1" fill="#a0a0a0"/></svg><div class="a " style="left:7px;top:910px;width:1248px;height:1px;background:#808080"></div><div class="a " style="left:7px;top:911px;width:1248px;height:1px;background:#fff"></div><div class="a t " style="left:8px;top:916px;">For Help, press F1</div><div class="a thinsunk" style="left:471px;top:914px;width:262px;height:16px;"></div><div class="a thinsunk" style="left:736px;top:914px;width:141px;height:16px;"></div><div class="a t " style="left:738px;top:916px;">RDI Interface Driver</div><div class="a thinsunk" style="left:880px;top:914px;width:108px;height:16px;"></div><div class="a t " style="left:882px;top:916px;">t1: 0.00000000 sec</div><div class="a thinsunk" style="left:991px;top:914px;width:94px;height:16px;"></div><div class="a thinsunk" style="left:1087px;top:914px;width:24px;height:16px;"></div><div class="a thinsunk" style="left:1114px;top:914px;width:29px;height:16px;"></div><div class="a t " style="left:1116px;top:916px;">NUM</div><div class="a thinsunk" style="left:1145px;top:914px;width:30px;height:16px;"></div><div class="a thinsunk" style="left:1178px;top:914px;width:26px;height:16px;"></div><div class="a thinsunk" style="left:1206px;top:914px;width:31px;height:16px;"></div><div class="a t " style="left:1208px;top:916px;">R/W</div><svg style="left:1240px;top:916px" width="14" height="14" viewBox="0 0 14 14" shape-rendering="crispEdges"><path d="M13 1L1 13M13 5L5 13M13 9L9 13" stroke="#808080" stroke-width="1"/><path d="M13 2L2 13M13 6L6 13M13 10L10 13" stroke="#fff" stroke-width="1"/></svg></body></html>
